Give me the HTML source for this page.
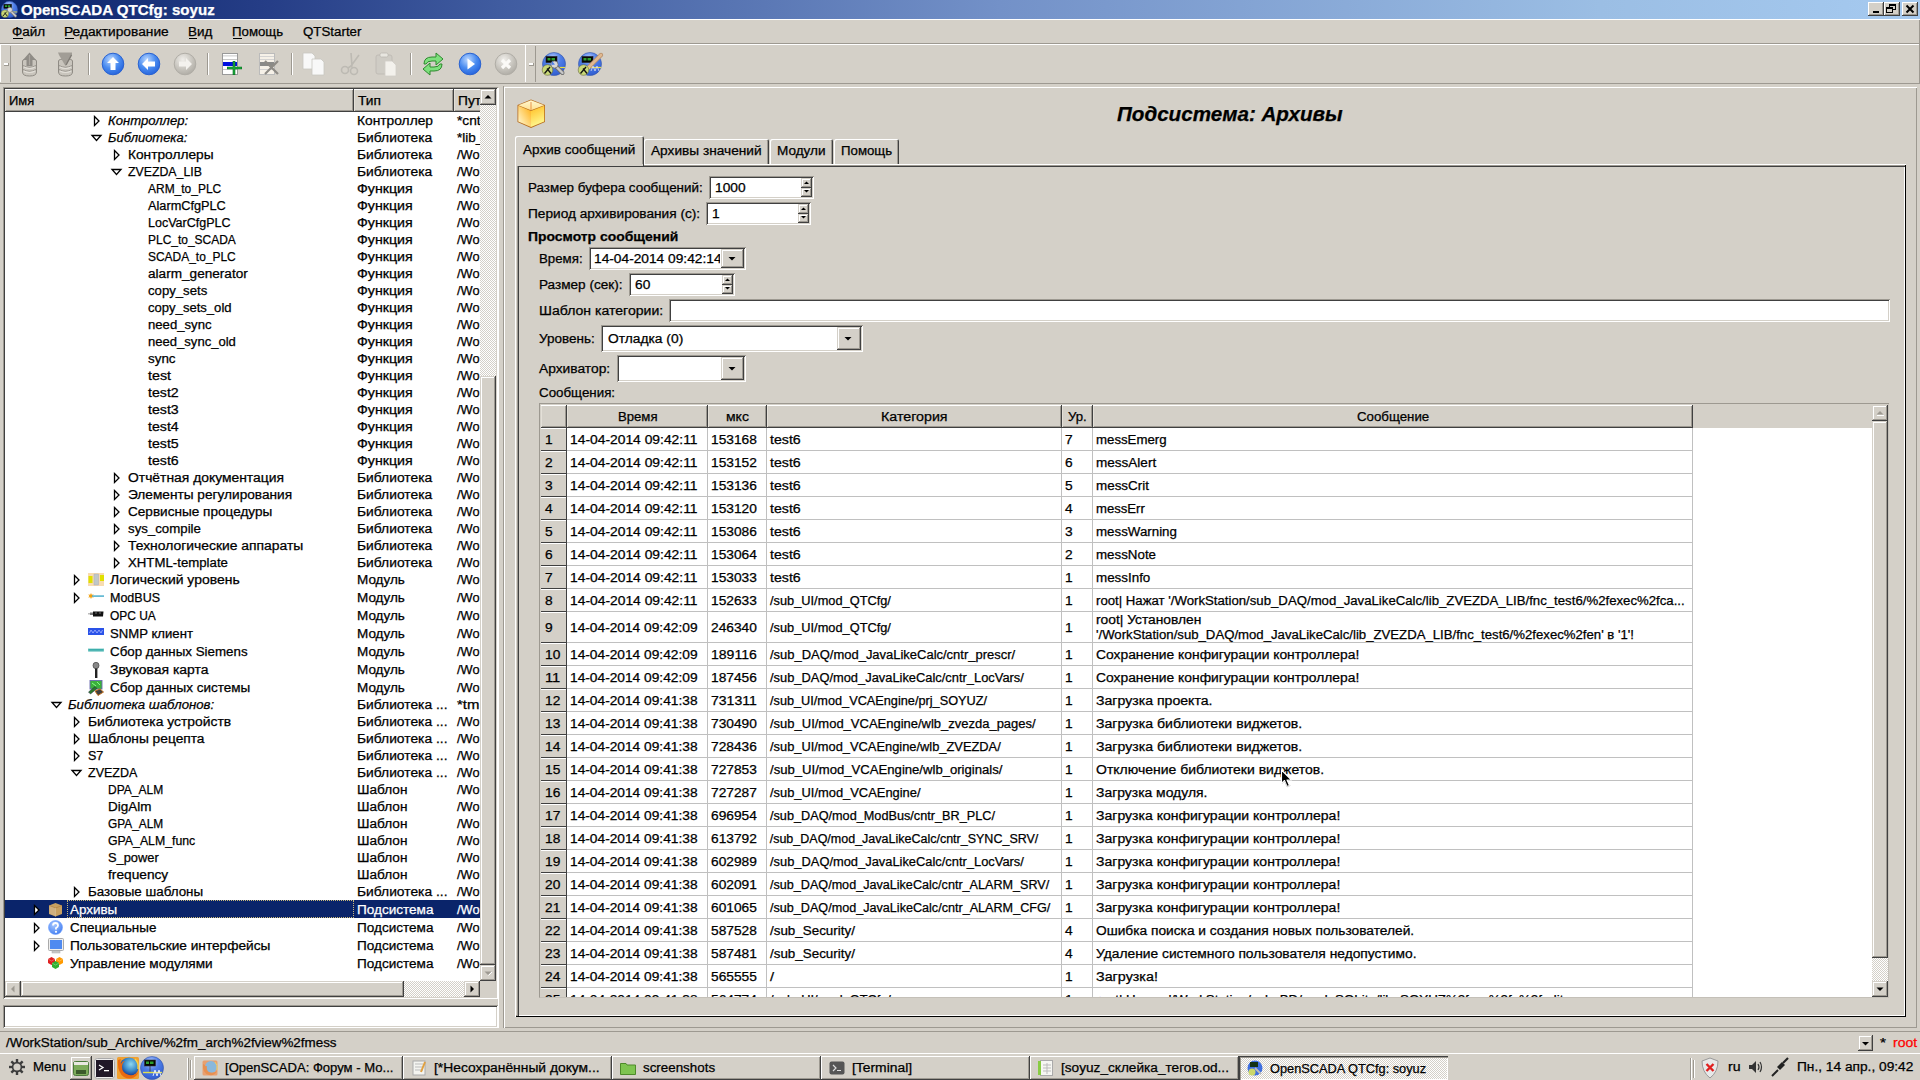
<!DOCTYPE html><html><head><meta charset="utf-8"><style>
html,body{margin:0;padding:0;}
body{width:1920px;height:1080px;overflow:hidden;position:relative;background:#d4d0c8;font-family:"Liberation Sans", sans-serif;font-size:13.4px;color:#000;}
body div{position:absolute;box-sizing:border-box;}
.t{white-space:nowrap;-webkit-text-stroke:0.25px currentColor;}
svg{position:absolute;overflow:visible;}
</style></head><body>
<div style="left:0px;top:0px;width:1920px;height:19px;background:linear-gradient(90deg,rgb(10,36,106) 0%,rgb(38,62,135) 14.06%,rgb(64,92,160) 26.04%,rgb(115,145,200) 52.08%,rgb(155,190,228) 83.33%,rgb(162,198,236) 94.8%,rgb(166,202,240) 100%);"></div><div class="t" style="left:21.00px;top:1.39px;line-height:19px;font-size:13.89px;font-weight:bold;color:#fff;transform:scaleX(1.0862);transform-origin:0 0;">OpenSCADA QTCfg: soyuz</div><div style="left:1868px;top:2px;width:16px;height:14px;background:#d4d0c8;box-shadow: inset -1px -1px #404040, inset 1px 1px #fff, inset -2px -2px #9d9991;"></div><div style="left:1884px;top:2px;width:16px;height:14px;background:#d4d0c8;box-shadow: inset -1px -1px #404040, inset 1px 1px #fff, inset -2px -2px #9d9991;"></div><div style="left:1902px;top:2px;width:16px;height:14px;background:#d4d0c8;box-shadow: inset -1px -1px #404040, inset 1px 1px #fff, inset -2px -2px #9d9991;"></div><svg style="left:1868px;top:2px" width="50" height="14"><rect x="5" y="9" width="6" height="2" fill="#000"/><rect x="21.5" y="2.5" width="6" height="5" fill="none" stroke="#000" stroke-width="1"/><rect x="21" y="2" width="7" height="2" fill="#000"/><rect x="18.5" y="5.5" width="6" height="5" fill="#d4d0c8" stroke="#000" stroke-width="1"/><rect x="18" y="5" width="7" height="2" fill="#000"/><path d="M38.5 3.5 L45.5 10.5 M45.5 3.5 L38.5 10.5" stroke="#000" stroke-width="2"/></svg><div style="left:0px;top:19px;width:1920px;height:1px;background:#fff;"></div><div style="left:1919px;top:20px;width:1px;height:64px;background:#9d9991;"></div><div style="left:0px;top:43px;width:1919px;height:1px;background:#9d9991;"></div><div style="left:0px;top:44px;width:1919px;height:1px;background:#fff;"></div><div class="t" style="left:12.00px;top:23.87px;line-height:17px;font-size:12.5px;transform:scaleX(1.0788);transform-origin:0 0;">Файл</div><div class="t" style="left:64.00px;top:23.87px;line-height:17px;font-size:12.5px;transform:scaleX(1.0999);transform-origin:0 0;">Редактирование</div><div class="t" style="left:188.00px;top:23.87px;line-height:17px;font-size:12.5px;transform:scaleX(1.0753);transform-origin:0 0;">Вид</div><div class="t" style="left:232.00px;top:23.87px;line-height:17px;font-size:12.5px;transform:scaleX(1.0592);transform-origin:0 0;">Помощь</div><div class="t" style="left:303.00px;top:23.87px;line-height:17px;font-size:12.5px;transform:scaleX(1.0652);transform-origin:0 0;">QTStarter</div><div style="left:13px;top:38px;width:10px;height:1px;background:#000;"></div><div style="left:65px;top:38px;width:9px;height:1px;background:#000;"></div><div style="left:189px;top:38px;width:8px;height:1px;background:#000;"></div><div style="left:233px;top:38px;width:9px;height:1px;background:#000;"></div><div style="left:0px;top:83px;width:1919px;height:1px;background:#9d9991;"></div><div style="left:0px;top:45px;width:1px;height:37px;background:#fff;"></div><div style="left:4px;top:63px;width:5px;height:3px;background:#fff;box-shadow: inset -1px -1px #9d9991;"></div><div style="left:10px;top:46px;width:1px;height:36px;background:#9d9991;"></div><div style="left:525px;top:45px;width:1px;height:37px;background:#fff;"></div><div style="left:529px;top:63px;width:5px;height:3px;background:#fff;box-shadow: inset -1px -1px #9d9991;"></div><div style="left:535px;top:46px;width:1px;height:36px;background:#9d9991;"></div><div style="left:88px;top:53px;width:1px;height:22px;background:#9d9991;"></div><div style="left:89px;top:53px;width:1px;height:22px;background:#fff;"></div><div style="left:207px;top:53px;width:1px;height:22px;background:#9d9991;"></div><div style="left:208px;top:53px;width:1px;height:22px;background:#fff;"></div><div style="left:291px;top:53px;width:1px;height:22px;background:#9d9991;"></div><div style="left:292px;top:53px;width:1px;height:22px;background:#fff;"></div><div style="left:410px;top:53px;width:1px;height:22px;background:#9d9991;"></div><div style="left:411px;top:53px;width:1px;height:22px;background:#fff;"></div><svg style="left:0;top:0" width="0" height="0"><defs><linearGradient id="gdb" x1="0" x2="1"><stop offset="0" stop-color="#b8b5ae"/><stop offset="0.5" stop-color="#e0ddd6"/><stop offset="1" stop-color="#a8a59e"/></linearGradient><radialGradient id="blu" cx="0.4" cy="0.3" r="0.8"><stop offset="0" stop-color="#bcd8ff"/><stop offset="0.5" stop-color="#4a8cf0"/><stop offset="1" stop-color="#1d5ad8"/></radialGradient><radialGradient id="gry" cx="0.4" cy="0.3" r="0.8"><stop offset="0" stop-color="#f0eeea"/><stop offset="0.6" stop-color="#c4c1ba"/><stop offset="1" stop-color="#a9a69f"/></radialGradient><linearGradient id="cube" x1="0" y1="0" x2="1" y2="1"><stop offset="0" stop-color="#fff6c0"/><stop offset="0.5" stop-color="#ffc830"/><stop offset="1" stop-color="#ffe890"/></linearGradient></defs></svg><svg style="left:21px;top:52px" width="18" height="24" viewBox="0 0 18 24"><path d="M1.5 9 Q1.5 7 8.5 7 Q15.5 7 15.5 9 L15.5 20 Q15.5 24 8.5 24 Q1.5 24 1.5 20 Z" fill="#c9c5bd" stroke="#8f8b84" stroke-width="1"/><path d="M2 13.5 Q8.5 17 15 13.5 M2 17.5 Q8.5 21 15 17.5" stroke="#99958e" stroke-width="1" fill="none"/><path d="M3 15 Q8.5 18 14 15 M3 19 Q8.5 22 14 19" stroke="#e2dfd8" stroke-width="1.2" fill="none"/><path d="M8.5 0.5 L15 8 L11.5 8 L11.5 14 L5.5 14 L5.5 8 L2 8 Z" fill="#8f8c86"/><path d="M8.5 3 L8.5 13" stroke="#aaa69f" stroke-width="1.2"/></svg><svg style="left:57px;top:52px" width="18" height="24" viewBox="0 0 18 24"><path d="M1.5 9 Q1.5 7 8.5 7 Q15.5 7 15.5 9 L15.5 20 Q15.5 24 8.5 24 Q1.5 24 1.5 20 Z" fill="#c9c5bd" stroke="#8f8b84" stroke-width="1"/><path d="M2 13.5 Q8.5 17 15 13.5 M2 17.5 Q8.5 21 15 17.5" stroke="#99958e" stroke-width="1" fill="none"/><path d="M3 15 Q8.5 18 14 15 M3 19 Q8.5 22 14 19" stroke="#e2dfd8" stroke-width="1.2" fill="none"/><path d="M1 0.5 L15 0.5 L15 3 L8.5 14 L2 3 Z" fill="#a19d96"/><path d="M14.5 3 L9 13" stroke="#7f7b75" stroke-width="1.4"/></svg><svg style="left:101px;top:52px" width="24" height="24" viewBox="0 0 24 24"><circle cx="12" cy="12" r="10.8" fill="url(#blu)" stroke="#2a62d0" stroke-width="1"/><path d="M12 5 L18 11 L14.5 11 L14.5 18 L9.5 18 L9.5 11 L6 11 Z" fill="#fff"/></svg><svg style="left:137px;top:52px" width="24" height="24" viewBox="0 0 24 24"><circle cx="12" cy="12" r="10.8" fill="url(#blu)" stroke="#2a62d0" stroke-width="1"/><path d="M5 12 L11 6 L11 9.5 L18 9.5 L18 14.5 L11 14.5 L11 18 Z" fill="#fff"/></svg><svg style="left:173px;top:52px" width="24" height="24" viewBox="0 0 24 24"><circle cx="12" cy="12" r="10.8" fill="url(#gry)" stroke="#b0ada6" stroke-width="1"/><path d="M19 12 L13 6 L13 9.5 L6 9.5 L6 14.5 L13 14.5 L13 18 Z" fill="#f4f2ee"/></svg><svg style="left:222px;top:52px" width="24" height="24" viewBox="0 0 24 24"><rect x="0.5" y="1.5" width="15" height="21" fill="#fff" stroke="#999" stroke-width="1"/><rect x="1" y="3.5" width="14" height="0.8" fill="#bbb"/><rect x="1" y="7" width="14" height="0.8" fill="#bbb"/><rect x="1" y="10" width="14" height="4" fill="#0010e0"/><rect x="1" y="17" width="14" height="0.8" fill="#bbb"/><path d="M12 9 L12 23 M5 16 L20 16" stroke="#0a6e20" stroke-width="2.6"/><path d="M12 9.5 L12 22.5 M5.5 16 L19.5 16" stroke="#1aa83a" stroke-width="1.4"/></svg><svg style="left:259px;top:52px" width="24" height="24" viewBox="0 0 24 24"><rect x="0.5" y="1.5" width="15" height="21" fill="#f6f1e8" stroke="#bbb" stroke-width="1"/><rect x="1" y="4" width="14" height="0.8" fill="#ccc"/><rect x="1" y="7" width="14" height="0.8" fill="#ccc"/><rect x="1" y="10" width="14" height="4" fill="#8a8a88"/><rect x="1" y="17" width="14" height="0.8" fill="#ccc"/><path d="M6 22 L19 9 M6 9 L19 22" stroke="#8e8b86" stroke-width="2.2"/></svg><svg style="left:302px;top:52px" width="24" height="24" viewBox="0 0 24 24"><path d="M1 1 L10 1 L13 4 L13 17 L1 17 Z" fill="#f8f8f8" stroke="#c8c6c0" stroke-width="0.8"/><path d="M10 7 L19 7 L22 10 L22 23 L10 23 Z" fill="#f8f8f8" stroke="#c8c6c0" stroke-width="0.8"/></svg><svg style="left:339px;top:52px" width="24" height="24" viewBox="0 0 24 24"><path d="M12 1 L13 14 M20 3 L12 14" stroke="#bdbab3" stroke-width="1.6" fill="none"/><circle cx="6" cy="18" r="3.5" fill="none" stroke="#bdbab3" stroke-width="1.6"/><circle cx="15" cy="19" r="3.5" fill="none" stroke="#bdbab3" stroke-width="1.6"/><path d="M9 16 L12 14 L14 16" stroke="#bdbab3" stroke-width="1.6" fill="none"/></svg><svg style="left:375px;top:52px" width="24" height="24" viewBox="0 0 24 24"><rect x="1" y="3" width="16" height="19" rx="2" fill="#cfccc5" stroke="#bbb8b1" stroke-width="0.8"/><rect x="5" y="1" width="8" height="4" rx="1.5" fill="#e8e6e0" stroke="#bbb8b1" stroke-width="0.8"/><path d="M10 9 L17 9 L21 13 L21 24 L10 24 Z" fill="#f3f1ec" stroke="#d0cec8" stroke-width="0.8"/></svg><svg style="left:421px;top:52px" width="24" height="24" viewBox="0 0 24 24"><path d="M3 12 Q3 5 11 5 L15 5 L15 1 L22 7 L15 13 L15 9 L11 9 Q6 9 5 12 Z" fill="#7de07d" stroke="#2e8a2e" stroke-width="1"/><path d="M21 12 Q21 19 13 19 L9 19 L9 23 L2 17 L9 11 L9 15 L13 15 Q18 15 19 12 Z" fill="#7de07d" stroke="#2e8a2e" stroke-width="1"/></svg><svg style="left:458px;top:52px" width="24" height="24" viewBox="0 0 24 24"><circle cx="12" cy="12" r="10.8" fill="url(#blu)" stroke="#2a62d0" stroke-width="1"/><path d="M9.5 6.5 L17 12 L9.5 17.5 Z" fill="#fff"/></svg><svg style="left:494px;top:52px" width="24" height="24" viewBox="0 0 24 24"><circle cx="12" cy="12" r="10.8" fill="url(#gry)" stroke="#b0ada6" stroke-width="1"/><path d="M8 8 L16 16 M16 8 L8 16" stroke="#fbfaf7" stroke-width="3.2"/></svg><svg style="left:542px;top:52px" width="24" height="24" viewBox="0 0 24 24"><defs><radialGradient id="osb" cx="0.45" cy="0.25" r="0.75"><stop offset="0" stop-color="#b8ccff"/><stop offset="0.45" stop-color="#4f7fe8"/><stop offset="1" stop-color="#2f5cd0"/></radialGradient></defs><circle cx="12" cy="12" r="11.5" fill="url(#osb)" stroke="#3556a8" stroke-width="0.6"/><rect x="4" y="4.5" width="11" height="6" fill="#060806" stroke="#222" stroke-width="0.6"/><rect x="5.5" y="6" width="3" height="2.5" fill="#2ea02e"/><rect x="9.5" y="6" width="3.5" height="2.5" fill="#2ea02e"/><path d="M12 15.5 L23 15.5" stroke="#e8e040" stroke-width="1.2"/><path d="M14.5 15 L20.5 21" stroke="#6f6f6f" stroke-width="4" stroke-linecap="round"/><path d="M14.5 15 L20.5 21" stroke="#c8c8c8" stroke-width="2.4" stroke-linecap="round"/><circle cx="12.5" cy="12.5" r="3.6" fill="#d8d8d8" stroke="#666" stroke-width="0.7"/><path d="M10 9 L13 12.5 L9.5 13 Z" fill="#4f7fe8"/><circle cx="5.5" cy="18" r="5.3" fill="#c8d878" stroke="#6a6a40" stroke-width="0.6"/><path d="M2.5 21.5 L8 15 M5 16.5 L9 21.5" stroke="#111" stroke-width="1.3"/></svg><svg style="left:578px;top:52px" width="24" height="24" viewBox="0 0 24 24"><defs><radialGradient id="osb" cx="0.45" cy="0.25" r="0.75"><stop offset="0" stop-color="#b8ccff"/><stop offset="0.45" stop-color="#4f7fe8"/><stop offset="1" stop-color="#2f5cd0"/></radialGradient></defs><circle cx="12" cy="12" r="11.5" fill="url(#osb)" stroke="#3556a8" stroke-width="0.6"/><rect x="4" y="4.5" width="11" height="6" fill="#060806" stroke="#222" stroke-width="0.6"/><rect x="5.5" y="6" width="3" height="2.5" fill="#2ea02e"/><rect x="9.5" y="6" width="3.5" height="2.5" fill="#2ea02e"/><path d="M12 15.5 L23 15.5" stroke="#e8e040" stroke-width="1.2"/><path d="M23 3 L11 15" stroke="#b8906a" stroke-width="4.2" stroke-linecap="round"/><path d="M23 3 L11 15" stroke="#e0b890" stroke-width="2.6" stroke-linecap="round"/><path d="M11 15 L9.5 17" stroke="#e8e070" stroke-width="3"/><path d="M13 19 L15 14 L17 19 L19 14 L21 19" stroke="#dde" stroke-width="0.8" fill="none"/><circle cx="5.5" cy="18" r="5.3" fill="#c8d878" stroke="#6a6a40" stroke-width="0.6"/><path d="M2.5 21.5 L8 15 M5 16.5 L9 21.5" stroke="#111" stroke-width="1.3"/></svg><svg style="left:1px;top:1px" width="17" height="17" viewBox="0 0 24 24"><defs><radialGradient id="osb2" cx="0.45" cy="0.25" r="0.75"><stop offset="0" stop-color="#b8ccff"/><stop offset="0.45" stop-color="#4f7fe8"/><stop offset="1" stop-color="#2f5cd0"/></radialGradient></defs><circle cx="12" cy="12" r="11.5" fill="url(#osb2)" stroke="#3556a8" stroke-width="0.6"/><rect x="4" y="4.5" width="11" height="6" fill="#060806" stroke="#222" stroke-width="0.6"/><rect x="5.5" y="6" width="3" height="2.5" fill="#2ea02e"/><rect x="9.5" y="6" width="3.5" height="2.5" fill="#2ea02e"/><path d="M12 15.5 L23 15.5" stroke="#e8e040" stroke-width="1.2"/><path d="M14.5 15 L20.5 21" stroke="#6f6f6f" stroke-width="4" stroke-linecap="round"/><path d="M14.5 15 L20.5 21" stroke="#c8c8c8" stroke-width="2.4" stroke-linecap="round"/><circle cx="12.5" cy="12.5" r="3.6" fill="#d8d8d8" stroke="#666" stroke-width="0.7"/><circle cx="5.5" cy="18" r="5.3" fill="#c8d878" stroke="#6a6a40" stroke-width="0.6"/><path d="M2.5 21.5 L8 15 M5 16.5 L9 21.5" stroke="#111" stroke-width="1.3"/></svg><div style="left:3px;top:87px;width:495px;height:912px;background:#fff;box-shadow: inset 1px 1px #9d9991, inset -1px -1px #fff, inset 2px 2px #404040, inset -2px -2px #d4d0c8;"></div><div style="left:5px;top:89px;width:349px;height:23px;background:#d4d0c8;box-shadow: inset -1px -1px #404040, inset 0 1px #fff, inset 1px 0 #e4e0d8, inset -2px -2px #9d9991;"></div><div style="left:354px;top:89px;width:100px;height:23px;background:#d4d0c8;box-shadow: inset -1px -1px #404040, inset 0 1px #fff, inset 1px 0 #e4e0d8, inset -2px -2px #9d9991;"></div><div style="left:454px;top:89px;width:40px;height:23px;background:#d4d0c8;box-shadow: inset -1px -1px #404040, inset 0 1px #fff, inset 1px 0 #e4e0d8, inset -2px -2px #9d9991;"></div><div class="t" style="left:9.00px;top:92.87px;line-height:17px;font-size:12.5px;transform:scaleX(1.0372);transform-origin:0 0;">Имя</div><div class="t" style="left:358.00px;top:92.87px;line-height:17px;font-size:12.5px;transform:scaleX(1.1019);transform-origin:0 0;">Тип</div><div style="left:458px;top:89px;width:22px;height:22px;overflow:hidden;"><div class="t" style="left:0.00px;top:3.87px;line-height:17px;font-size:12.5px;transform:scaleX(1.0995);transform-origin:0 0;">Путь</div></div><div style="left:480px;top:89px;width:16px;height:892px;background-color:#fff;background-image:linear-gradient(45deg,#d4d0c8 25%,transparent 25%,transparent 75%,#d4d0c8 75%),linear-gradient(45deg,#d4d0c8 25%,transparent 25%,transparent 75%,#d4d0c8 75%);background-size:2px 2px;background-position:0 0,1px 1px;"></div><div style="left:480px;top:89px;width:16px;height:16px;background:#d4d0c8;box-shadow: inset -1px -1px #404040, inset 1px 1px #d4d0c8, inset -2px -2px #9d9991, inset 2px 2px #fff;"></div><svg style="left:480px;top:89px" width="16" height="16" viewBox="0 0 16 16"><path d="M4.5 9.5 L8 6 L11.5 9.5 Z" fill="#000"/></svg><div style="left:480px;top:376px;width:16px;height:589px;background:#d4d0c8;box-shadow: inset -1px -1px #404040, inset 1px 1px #d4d0c8, inset -2px -2px #9d9991, inset 2px 2px #fff;"></div><div style="left:480px;top:965px;width:16px;height:16px;background:#d4d0c8;box-shadow: inset -1px -1px #404040, inset 1px 1px #d4d0c8, inset -2px -2px #9d9991, inset 2px 2px #fff;"></div><svg style="left:480px;top:965px" width="16" height="16" viewBox="0 0 16 16"><path d="M4.5 6.5 L8 10 L11.5 6.5 Z" fill="#9d9991"/><path d="M8.5 10.5 L12 7" stroke="#fff" stroke-width="1"/></svg><div style="left:5px;top:981px;width:475px;height:16px;background-color:#fff;background-image:linear-gradient(45deg,#d4d0c8 25%,transparent 25%,transparent 75%,#d4d0c8 75%),linear-gradient(45deg,#d4d0c8 25%,transparent 25%,transparent 75%,#d4d0c8 75%);background-size:2px 2px;background-position:0 0,1px 1px;"></div><div style="left:5px;top:981px;width:16px;height:16px;background:#d4d0c8;box-shadow: inset -1px -1px #404040, inset 1px 1px #d4d0c8, inset -2px -2px #9d9991, inset 2px 2px #fff;"></div><svg style="left:5px;top:981px" width="16" height="16" viewBox="0 0 16 16"><path d="M9.5 4.5 L6 8 L9.5 11.5 Z" fill="#9d9991"/></svg><div style="left:21px;top:981px;width:383px;height:16px;background:#d4d0c8;box-shadow: inset -1px -1px #404040, inset 1px 1px #d4d0c8, inset -2px -2px #9d9991, inset 2px 2px #fff;"></div><div style="left:464px;top:981px;width:16px;height:16px;background:#d4d0c8;box-shadow: inset -1px -1px #404040, inset 1px 1px #d4d0c8, inset -2px -2px #9d9991, inset 2px 2px #fff;"></div><svg style="left:464px;top:981px" width="16" height="16" viewBox="0 0 16 16"><path d="M6.5 4.5 L10 8 L6.5 11.5 Z" fill="#000"/></svg><div style="left:480px;top:981px;width:16px;height:16px;background:#d4d0c8;"></div><div style="left:5px;top:900px;width:475px;height:18px;background:#0a246a;"></div><div style="left:67px;top:900px;width:287px;height:18px;border:1px dotted #c9b87a;"></div><div style="left:5px;top:112px;width:475px;height:869px;overflow:hidden;"><svg style="left:0;top:0" width="475" height="1"><path d="M89.5 4.5 L94.0 9.0 L89.5 13.5 Z" fill="none" stroke="#000" stroke-width="1.3"/></svg><div class="t" style="left:103.00px;top:0.87px;line-height:17px;font-size:12.5px;font-style:italic;color:#000;transform:scaleX(1.0459);transform-origin:0 0;">Контроллер:</div><div class="t" style="left:352.00px;top:0.87px;line-height:17px;font-size:12.5px;color:#000;transform:scaleX(1.1019);transform-origin:0 0;">Контроллер</div><div class="t" style="left:452.00px;top:0.87px;line-height:17px;font-size:12.5px;color:#000;transform:scaleX(1.0981);transform-origin:0 0;">*cntr_</div><svg style="left:0;top:0" width="475" height="1"><path d="M87.0 23.5 L96.0 23.5 L91.5 28.5 Z" fill="none" stroke="#000" stroke-width="1.3"/></svg><div class="t" style="left:103.00px;top:17.87px;line-height:17px;font-size:12.5px;font-style:italic;color:#000;transform:scaleX(1.0366);transform-origin:0 0;">Библиотека:</div><div class="t" style="left:352.00px;top:17.87px;line-height:17px;font-size:12.5px;color:#000;transform:scaleX(1.1069);transform-origin:0 0;">Библиотека</div><div class="t" style="left:452.00px;top:17.87px;line-height:17px;font-size:12.5px;color:#000;transform:scaleX(1.0803);transform-origin:0 0;">*lib_</div><svg style="left:0;top:0" width="475" height="1"><path d="M109.5 38.5 L114.0 43.0 L109.5 47.5 Z" fill="none" stroke="#000" stroke-width="1.3"/></svg><div class="t" style="left:123.00px;top:34.87px;line-height:17px;font-size:12.5px;color:#000;transform:scaleX(1.0964);transform-origin:0 0;">Контроллеры</div><div class="t" style="left:352.00px;top:34.87px;line-height:17px;font-size:12.5px;color:#000;transform:scaleX(1.1069);transform-origin:0 0;">Библиотека</div><div class="t" style="left:452.00px;top:34.87px;line-height:17px;font-size:12.5px;color:#000;transform:scaleX(1.0249);transform-origin:0 0;">/Wo</div><svg style="left:0;top:0" width="475" height="1"><path d="M107.0 57.5 L116.0 57.5 L111.5 62.5 Z" fill="none" stroke="#000" stroke-width="1.3"/></svg><div class="t" style="left:123.00px;top:51.87px;line-height:17px;font-size:12.5px;color:#000;transform:scaleX(0.9848);transform-origin:0 0;">ZVEZDA_LIB</div><div class="t" style="left:352.00px;top:51.87px;line-height:17px;font-size:12.5px;color:#000;transform:scaleX(1.1069);transform-origin:0 0;">Библиотека</div><div class="t" style="left:452.00px;top:51.87px;line-height:17px;font-size:12.5px;color:#000;transform:scaleX(1.0249);transform-origin:0 0;">/Wo</div><div class="t" style="left:143.00px;top:68.87px;line-height:17px;font-size:12.5px;color:#000;transform:scaleX(0.9583);transform-origin:0 0;">ARM_to_PLC</div><div class="t" style="left:352.00px;top:68.87px;line-height:17px;font-size:12.5px;color:#000;transform:scaleX(1.1364);transform-origin:0 0;">Функция</div><div class="t" style="left:452.00px;top:68.87px;line-height:17px;font-size:12.5px;color:#000;transform:scaleX(1.0249);transform-origin:0 0;">/Wo</div><div class="t" style="left:143.00px;top:85.87px;line-height:17px;font-size:12.5px;color:#000;transform:scaleX(1.0184);transform-origin:0 0;">AlarmCfgPLC</div><div class="t" style="left:352.00px;top:85.87px;line-height:17px;font-size:12.5px;color:#000;transform:scaleX(1.1364);transform-origin:0 0;">Функция</div><div class="t" style="left:452.00px;top:85.87px;line-height:17px;font-size:12.5px;color:#000;transform:scaleX(1.0249);transform-origin:0 0;">/Wo</div><div class="t" style="left:143.00px;top:102.87px;line-height:17px;font-size:12.5px;color:#000;">LocVarCfgPLC</div><div class="t" style="left:352.00px;top:102.87px;line-height:17px;font-size:12.5px;color:#000;transform:scaleX(1.1364);transform-origin:0 0;">Функция</div><div class="t" style="left:452.00px;top:102.87px;line-height:17px;font-size:12.5px;color:#000;transform:scaleX(1.0249);transform-origin:0 0;">/Wo</div><div class="t" style="left:143.00px;top:119.87px;line-height:17px;font-size:12.5px;color:#000;transform:scaleX(0.9567);transform-origin:0 0;">PLC_to_SCADA</div><div class="t" style="left:352.00px;top:119.87px;line-height:17px;font-size:12.5px;color:#000;transform:scaleX(1.1364);transform-origin:0 0;">Функция</div><div class="t" style="left:452.00px;top:119.87px;line-height:17px;font-size:12.5px;color:#000;transform:scaleX(1.0249);transform-origin:0 0;">/Wo</div><div class="t" style="left:143.00px;top:136.87px;line-height:17px;font-size:12.5px;color:#000;transform:scaleX(0.9567);transform-origin:0 0;">SCADA_to_PLC</div><div class="t" style="left:352.00px;top:136.87px;line-height:17px;font-size:12.5px;color:#000;transform:scaleX(1.1364);transform-origin:0 0;">Функция</div><div class="t" style="left:452.00px;top:136.87px;line-height:17px;font-size:12.5px;color:#000;transform:scaleX(1.0249);transform-origin:0 0;">/Wo</div><div class="t" style="left:143.00px;top:153.87px;line-height:17px;font-size:12.5px;color:#000;transform:scaleX(1.0879);transform-origin:0 0;">alarm_generator</div><div class="t" style="left:352.00px;top:153.87px;line-height:17px;font-size:12.5px;color:#000;transform:scaleX(1.1364);transform-origin:0 0;">Функция</div><div class="t" style="left:452.00px;top:153.87px;line-height:17px;font-size:12.5px;color:#000;transform:scaleX(1.0249);transform-origin:0 0;">/Wo</div><div class="t" style="left:143.00px;top:170.87px;line-height:17px;font-size:12.5px;color:#000;transform:scaleX(1.0530);transform-origin:0 0;">copy_sets</div><div class="t" style="left:352.00px;top:170.87px;line-height:17px;font-size:12.5px;color:#000;transform:scaleX(1.1364);transform-origin:0 0;">Функция</div><div class="t" style="left:452.00px;top:170.87px;line-height:17px;font-size:12.5px;color:#000;transform:scaleX(1.0249);transform-origin:0 0;">/Wo</div><div class="t" style="left:143.00px;top:187.87px;line-height:17px;font-size:12.5px;color:#000;transform:scaleX(1.0456);transform-origin:0 0;">copy_sets_old</div><div class="t" style="left:352.00px;top:187.87px;line-height:17px;font-size:12.5px;color:#000;transform:scaleX(1.1364);transform-origin:0 0;">Функция</div><div class="t" style="left:452.00px;top:187.87px;line-height:17px;font-size:12.5px;color:#000;transform:scaleX(1.0249);transform-origin:0 0;">/Wo</div><div class="t" style="left:143.00px;top:204.87px;line-height:17px;font-size:12.5px;color:#000;transform:scaleX(1.0514);transform-origin:0 0;">need_sync</div><div class="t" style="left:352.00px;top:204.87px;line-height:17px;font-size:12.5px;color:#000;transform:scaleX(1.1364);transform-origin:0 0;">Функция</div><div class="t" style="left:452.00px;top:204.87px;line-height:17px;font-size:12.5px;color:#000;transform:scaleX(1.0249);transform-origin:0 0;">/Wo</div><div class="t" style="left:143.00px;top:221.87px;line-height:17px;font-size:12.5px;color:#000;transform:scaleX(1.0448);transform-origin:0 0;">need_sync_old</div><div class="t" style="left:352.00px;top:221.87px;line-height:17px;font-size:12.5px;color:#000;transform:scaleX(1.1364);transform-origin:0 0;">Функция</div><div class="t" style="left:452.00px;top:221.87px;line-height:17px;font-size:12.5px;color:#000;transform:scaleX(1.0249);transform-origin:0 0;">/Wo</div><div class="t" style="left:143.00px;top:238.87px;line-height:17px;font-size:12.5px;color:#000;transform:scaleX(1.0723);transform-origin:0 0;">sync</div><div class="t" style="left:352.00px;top:238.87px;line-height:17px;font-size:12.5px;color:#000;transform:scaleX(1.1364);transform-origin:0 0;">Функция</div><div class="t" style="left:452.00px;top:238.87px;line-height:17px;font-size:12.5px;color:#000;transform:scaleX(1.0249);transform-origin:0 0;">/Wo</div><div class="t" style="left:143.00px;top:255.87px;line-height:17px;font-size:12.5px;color:#000;transform:scaleX(1.1443);transform-origin:0 0;">test</div><div class="t" style="left:352.00px;top:255.87px;line-height:17px;font-size:12.5px;color:#000;transform:scaleX(1.1364);transform-origin:0 0;">Функция</div><div class="t" style="left:452.00px;top:255.87px;line-height:17px;font-size:12.5px;color:#000;transform:scaleX(1.0249);transform-origin:0 0;">/Wo</div><div class="t" style="left:143.00px;top:272.87px;line-height:17px;font-size:12.5px;color:#000;transform:scaleX(1.1326);transform-origin:0 0;">test2</div><div class="t" style="left:352.00px;top:272.87px;line-height:17px;font-size:12.5px;color:#000;transform:scaleX(1.1364);transform-origin:0 0;">Функция</div><div class="t" style="left:452.00px;top:272.87px;line-height:17px;font-size:12.5px;color:#000;transform:scaleX(1.0249);transform-origin:0 0;">/Wo</div><div class="t" style="left:143.00px;top:289.87px;line-height:17px;font-size:12.5px;color:#000;transform:scaleX(1.1326);transform-origin:0 0;">test3</div><div class="t" style="left:352.00px;top:289.87px;line-height:17px;font-size:12.5px;color:#000;transform:scaleX(1.1364);transform-origin:0 0;">Функция</div><div class="t" style="left:452.00px;top:289.87px;line-height:17px;font-size:12.5px;color:#000;transform:scaleX(1.0249);transform-origin:0 0;">/Wo</div><div class="t" style="left:143.00px;top:306.87px;line-height:17px;font-size:12.5px;color:#000;transform:scaleX(1.1326);transform-origin:0 0;">test4</div><div class="t" style="left:352.00px;top:306.87px;line-height:17px;font-size:12.5px;color:#000;transform:scaleX(1.1364);transform-origin:0 0;">Функция</div><div class="t" style="left:452.00px;top:306.87px;line-height:17px;font-size:12.5px;color:#000;transform:scaleX(1.0249);transform-origin:0 0;">/Wo</div><div class="t" style="left:143.00px;top:323.87px;line-height:17px;font-size:12.5px;color:#000;transform:scaleX(1.1326);transform-origin:0 0;">test5</div><div class="t" style="left:352.00px;top:323.87px;line-height:17px;font-size:12.5px;color:#000;transform:scaleX(1.1364);transform-origin:0 0;">Функция</div><div class="t" style="left:452.00px;top:323.87px;line-height:17px;font-size:12.5px;color:#000;transform:scaleX(1.0249);transform-origin:0 0;">/Wo</div><div class="t" style="left:143.00px;top:340.87px;line-height:17px;font-size:12.5px;color:#000;transform:scaleX(1.1326);transform-origin:0 0;">test6</div><div class="t" style="left:352.00px;top:340.87px;line-height:17px;font-size:12.5px;color:#000;transform:scaleX(1.1364);transform-origin:0 0;">Функция</div><div class="t" style="left:452.00px;top:340.87px;line-height:17px;font-size:12.5px;color:#000;transform:scaleX(1.0249);transform-origin:0 0;">/Wo</div><svg style="left:0;top:0" width="475" height="1"><path d="M109.5 361.5 L114.0 366.0 L109.5 370.5 Z" fill="none" stroke="#000" stroke-width="1.3"/></svg><div class="t" style="left:123.00px;top:357.87px;line-height:17px;font-size:12.5px;color:#000;transform:scaleX(1.1094);transform-origin:0 0;">Отчётная документация</div><div class="t" style="left:352.00px;top:357.87px;line-height:17px;font-size:12.5px;color:#000;transform:scaleX(1.1069);transform-origin:0 0;">Библиотека</div><div class="t" style="left:452.00px;top:357.87px;line-height:17px;font-size:12.5px;color:#000;transform:scaleX(1.0249);transform-origin:0 0;">/Wo</div><svg style="left:0;top:0" width="475" height="1"><path d="M109.5 378.5 L114.0 383.0 L109.5 387.5 Z" fill="none" stroke="#000" stroke-width="1.3"/></svg><div class="t" style="left:123.00px;top:374.87px;line-height:17px;font-size:12.5px;color:#000;transform:scaleX(1.0931);transform-origin:0 0;">Элементы регулирования</div><div class="t" style="left:352.00px;top:374.87px;line-height:17px;font-size:12.5px;color:#000;transform:scaleX(1.1069);transform-origin:0 0;">Библиотека</div><div class="t" style="left:452.00px;top:374.87px;line-height:17px;font-size:12.5px;color:#000;transform:scaleX(1.0249);transform-origin:0 0;">/Wo</div><svg style="left:0;top:0" width="475" height="1"><path d="M109.5 395.5 L114.0 400.0 L109.5 404.5 Z" fill="none" stroke="#000" stroke-width="1.3"/></svg><div class="t" style="left:123.00px;top:391.87px;line-height:17px;font-size:12.5px;color:#000;transform:scaleX(1.0860);transform-origin:0 0;">Сервисные процедуры</div><div class="t" style="left:352.00px;top:391.87px;line-height:17px;font-size:12.5px;color:#000;transform:scaleX(1.1069);transform-origin:0 0;">Библиотека</div><div class="t" style="left:452.00px;top:391.87px;line-height:17px;font-size:12.5px;color:#000;transform:scaleX(1.0249);transform-origin:0 0;">/Wo</div><svg style="left:0;top:0" width="475" height="1"><path d="M109.5 412.5 L114.0 417.0 L109.5 421.5 Z" fill="none" stroke="#000" stroke-width="1.3"/></svg><div class="t" style="left:123.00px;top:408.87px;line-height:17px;font-size:12.5px;color:#000;transform:scaleX(1.0600);transform-origin:0 0;">sys_compile</div><div class="t" style="left:352.00px;top:408.87px;line-height:17px;font-size:12.5px;color:#000;transform:scaleX(1.1069);transform-origin:0 0;">Библиотека</div><div class="t" style="left:452.00px;top:408.87px;line-height:17px;font-size:12.5px;color:#000;transform:scaleX(1.0249);transform-origin:0 0;">/Wo</div><svg style="left:0;top:0" width="475" height="1"><path d="M109.5 429.5 L114.0 434.0 L109.5 438.5 Z" fill="none" stroke="#000" stroke-width="1.3"/></svg><div class="t" style="left:123.00px;top:425.87px;line-height:17px;font-size:12.5px;color:#000;transform:scaleX(1.1114);transform-origin:0 0;">Технологические аппараты</div><div class="t" style="left:352.00px;top:425.87px;line-height:17px;font-size:12.5px;color:#000;transform:scaleX(1.1069);transform-origin:0 0;">Библиотека</div><div class="t" style="left:452.00px;top:425.87px;line-height:17px;font-size:12.5px;color:#000;transform:scaleX(1.0249);transform-origin:0 0;">/Wo</div><svg style="left:0;top:0" width="475" height="1"><path d="M109.5 446.5 L114.0 451.0 L109.5 455.5 Z" fill="none" stroke="#000" stroke-width="1.3"/></svg><div class="t" style="left:123.00px;top:442.87px;line-height:17px;font-size:12.5px;color:#000;transform:scaleX(1.0579);transform-origin:0 0;">XHTML-template</div><div class="t" style="left:352.00px;top:442.87px;line-height:17px;font-size:12.5px;color:#000;transform:scaleX(1.1069);transform-origin:0 0;">Библиотека</div><div class="t" style="left:452.00px;top:442.87px;line-height:17px;font-size:12.5px;color:#000;transform:scaleX(1.0249);transform-origin:0 0;">/Wo</div><svg style="left:0;top:0" width="475" height="1"><path d="M69.5 463.5 L74.0 468.0 L69.5 472.5 Z" fill="none" stroke="#000" stroke-width="1.3"/></svg><svg style="left:83px;top:460px" width="16" height="16" viewBox="0 0 16 16"><rect x="0" y="1" width="16" height="13" fill="#f8dcb0"/><rect x="0.5" y="4" width="4" height="7" fill="#e0e000"/><rect x="12" y="3" width="4" height="6" fill="#e0e000"/><rect x="6" y="2" width="4.5" height="11" fill="#c0c8c8" stroke="#aab" stroke-width="0.5"/></svg><div class="t" style="left:105.00px;top:459.87px;line-height:17px;font-size:12.5px;color:#000;transform:scaleX(1.1159);transform-origin:0 0;">Логический уровень</div><div class="t" style="left:352.00px;top:459.87px;line-height:17px;font-size:12.5px;color:#000;transform:scaleX(1.0804);transform-origin:0 0;">Модуль</div><div class="t" style="left:452.00px;top:459.87px;line-height:17px;font-size:12.5px;color:#000;transform:scaleX(1.0249);transform-origin:0 0;">/Wo</div><svg style="left:0;top:0" width="475" height="1"><path d="M69.5 481.5 L74.0 486.0 L69.5 490.5 Z" fill="none" stroke="#000" stroke-width="1.3"/></svg><svg style="left:83px;top:478px" width="16" height="16" viewBox="0 0 16 16"><path d="M3 3 L3.8 4.8 L5.8 4.5 L4.6 6 L5.8 7.5 L3.8 7.2 L3 9 L2.2 7.2 L0.2 7.5 L1.4 6 L0.2 4.5 L2.2 4.8 Z" fill="#f0a010"/><rect x="4" y="5.3" width="12" height="1.6" fill="#58b4d0"/></svg><div class="t" style="left:105.00px;top:477.87px;line-height:17px;font-size:12.5px;color:#000;">ModBUS</div><div class="t" style="left:352.00px;top:477.87px;line-height:17px;font-size:12.5px;color:#000;transform:scaleX(1.0804);transform-origin:0 0;">Модуль</div><div class="t" style="left:452.00px;top:477.87px;line-height:17px;font-size:12.5px;color:#000;transform:scaleX(1.0249);transform-origin:0 0;">/Wo</div><svg style="left:83px;top:496px" width="16" height="16" viewBox="0 0 16 16"><rect x="0" y="5" width="3" height="1.5" fill="#bbb"/><rect x="2" y="4.5" width="3" height="2.5" fill="#777"/><path d="M5 3.5 L15.5 3.5 L15 8.5 L5 8.5 Z" fill="#111"/><path d="M7 5 L9 5 M11 5 L13 5" stroke="#888" stroke-width="0.8"/></svg><div class="t" style="left:105.00px;top:495.87px;line-height:17px;font-size:12.5px;color:#000;transform:scaleX(0.9566);transform-origin:0 0;">OPC UA</div><div class="t" style="left:352.00px;top:495.87px;line-height:17px;font-size:12.5px;color:#000;transform:scaleX(1.0804);transform-origin:0 0;">Модуль</div><div class="t" style="left:452.00px;top:495.87px;line-height:17px;font-size:12.5px;color:#000;transform:scaleX(1.0249);transform-origin:0 0;">/Wo</div><svg style="left:83px;top:514px" width="16" height="16" viewBox="0 0 16 16"><rect x="0" y="2" width="16" height="7" fill="#2a52e8"/><path d="M1.5 7 L3 4 L5 7 L7 4 L9 7 L11 4 L13 7 L14.5 4" stroke="#aab8ff" stroke-width="0.8" fill="none"/></svg><div class="t" style="left:105.00px;top:513.87px;line-height:17px;font-size:12.5px;color:#000;transform:scaleX(1.0521);transform-origin:0 0;">SNMP клиент</div><div class="t" style="left:352.00px;top:513.87px;line-height:17px;font-size:12.5px;color:#000;transform:scaleX(1.0804);transform-origin:0 0;">Модуль</div><div class="t" style="left:452.00px;top:513.87px;line-height:17px;font-size:12.5px;color:#000;transform:scaleX(1.0249);transform-origin:0 0;">/Wo</div><svg style="left:83px;top:532px" width="16" height="16" viewBox="0 0 16 16"><rect x="0" y="4.5" width="16" height="3" fill="#80cdc8"/><path d="M0.5 5.5 H15.5 M0.5 6.8 H15.5" stroke="#20a0a0" stroke-width="0.7"/></svg><div class="t" style="left:105.00px;top:531.87px;line-height:17px;font-size:12.5px;color:#000;transform:scaleX(1.0668);transform-origin:0 0;">Сбор данных Siemens</div><div class="t" style="left:352.00px;top:531.87px;line-height:17px;font-size:12.5px;color:#000;transform:scaleX(1.0804);transform-origin:0 0;">Модуль</div><div class="t" style="left:452.00px;top:531.87px;line-height:17px;font-size:12.5px;color:#000;transform:scaleX(1.0249);transform-origin:0 0;">/Wo</div><svg style="left:83px;top:550px" width="16" height="16" viewBox="0 0 16 16"><ellipse cx="8" cy="3.5" rx="3" ry="3.2" fill="#888" stroke="#444" stroke-width="0.7"/><rect x="7" y="6.5" width="2.4" height="9.5" fill="#222"/></svg><div class="t" style="left:105.00px;top:549.87px;line-height:17px;font-size:12.5px;color:#000;transform:scaleX(1.1155);transform-origin:0 0;">Звуковая карта</div><div class="t" style="left:352.00px;top:549.87px;line-height:17px;font-size:12.5px;color:#000;transform:scaleX(1.0804);transform-origin:0 0;">Модуль</div><div class="t" style="left:452.00px;top:549.87px;line-height:17px;font-size:12.5px;color:#000;transform:scaleX(1.0249);transform-origin:0 0;">/Wo</div><svg style="left:83px;top:568px" width="16" height="16" viewBox="0 0 16 16"><rect x="2" y="0.5" width="12" height="8.5" fill="#3cb03c" stroke="#6a6ab0" stroke-width="0.9"/><path d="M4 3 L8 6 M9 2 L12 5" stroke="#8f8" stroke-width="1"/><path d="M0.5 12 L7 6.5 L9 8.5 L2.5 14 Z" fill="#2a7a2a" stroke="#224" stroke-width="0.5"/><path d="M7 11 L12 9 L15.5 12 L10 15.5 Z" fill="#404040" stroke="#c07020" stroke-width="1"/></svg><div class="t" style="left:105.00px;top:567.87px;line-height:17px;font-size:12.5px;color:#000;transform:scaleX(1.0789);transform-origin:0 0;">Сбор данных системы</div><div class="t" style="left:352.00px;top:567.87px;line-height:17px;font-size:12.5px;color:#000;transform:scaleX(1.0804);transform-origin:0 0;">Модуль</div><div class="t" style="left:452.00px;top:567.87px;line-height:17px;font-size:12.5px;color:#000;transform:scaleX(1.0249);transform-origin:0 0;">/Wo</div><svg style="left:0;top:0" width="475" height="1"><path d="M47.0 590.5 L56.0 590.5 L51.5 595.5 Z" fill="none" stroke="#000" stroke-width="1.3"/></svg><div class="t" style="left:63.00px;top:584.87px;line-height:17px;font-size:12.5px;font-style:italic;color:#000;transform:scaleX(1.0559);transform-origin:0 0;">Библиотека шаблонов:</div><div class="t" style="left:352.00px;top:584.87px;line-height:17px;font-size:12.5px;color:#000;transform:scaleX(1.1056);transform-origin:0 0;">Библиотека ...</div><div class="t" style="left:452.00px;top:584.87px;line-height:17px;font-size:12.5px;color:#000;transform:scaleX(1.1952);transform-origin:0 0;">*tm</div><svg style="left:0;top:0" width="475" height="1"><path d="M69.5 605.5 L74.0 610.0 L69.5 614.5 Z" fill="none" stroke="#000" stroke-width="1.3"/></svg><div class="t" style="left:83.00px;top:601.87px;line-height:17px;font-size:12.5px;color:#000;transform:scaleX(1.1096);transform-origin:0 0;">Библиотека устройств</div><div class="t" style="left:352.00px;top:601.87px;line-height:17px;font-size:12.5px;color:#000;transform:scaleX(1.1056);transform-origin:0 0;">Библиотека ...</div><div class="t" style="left:452.00px;top:601.87px;line-height:17px;font-size:12.5px;color:#000;transform:scaleX(1.0249);transform-origin:0 0;">/Wo</div><svg style="left:0;top:0" width="475" height="1"><path d="M69.5 622.5 L74.0 627.0 L69.5 631.5 Z" fill="none" stroke="#000" stroke-width="1.3"/></svg><div class="t" style="left:83.00px;top:618.87px;line-height:17px;font-size:12.5px;color:#000;transform:scaleX(1.0999);transform-origin:0 0;">Шаблоны рецепта</div><div class="t" style="left:352.00px;top:618.87px;line-height:17px;font-size:12.5px;color:#000;transform:scaleX(1.1056);transform-origin:0 0;">Библиотека ...</div><div class="t" style="left:452.00px;top:618.87px;line-height:17px;font-size:12.5px;color:#000;transform:scaleX(1.0249);transform-origin:0 0;">/Wo</div><svg style="left:0;top:0" width="475" height="1"><path d="M69.5 639.5 L74.0 644.0 L69.5 648.5 Z" fill="none" stroke="#000" stroke-width="1.3"/></svg><div class="t" style="left:83.00px;top:635.87px;line-height:17px;font-size:12.5px;color:#000;">S7</div><div class="t" style="left:352.00px;top:635.87px;line-height:17px;font-size:12.5px;color:#000;transform:scaleX(1.1056);transform-origin:0 0;">Библиотека ...</div><div class="t" style="left:452.00px;top:635.87px;line-height:17px;font-size:12.5px;color:#000;transform:scaleX(1.0249);transform-origin:0 0;">/Wo</div><svg style="left:0;top:0" width="475" height="1"><path d="M67.0 658.5 L76.0 658.5 L71.5 663.5 Z" fill="none" stroke="#000" stroke-width="1.3"/></svg><div class="t" style="left:83.00px;top:652.87px;line-height:17px;font-size:12.5px;color:#000;">ZVEZDA</div><div class="t" style="left:352.00px;top:652.87px;line-height:17px;font-size:12.5px;color:#000;transform:scaleX(1.1056);transform-origin:0 0;">Библиотека ...</div><div class="t" style="left:452.00px;top:652.87px;line-height:17px;font-size:12.5px;color:#000;transform:scaleX(1.0249);transform-origin:0 0;">/Wo</div><div class="t" style="left:103.00px;top:669.87px;line-height:17px;font-size:12.5px;color:#000;transform:scaleX(0.9600);transform-origin:0 0;">DPA_ALM</div><div class="t" style="left:352.00px;top:669.87px;line-height:17px;font-size:12.5px;color:#000;transform:scaleX(1.0898);transform-origin:0 0;">Шаблон</div><div class="t" style="left:452.00px;top:669.87px;line-height:17px;font-size:12.5px;color:#000;transform:scaleX(1.0249);transform-origin:0 0;">/Wo</div><div class="t" style="left:103.00px;top:686.87px;line-height:17px;font-size:12.5px;color:#000;transform:scaleX(1.0772);transform-origin:0 0;">DigAlm</div><div class="t" style="left:352.00px;top:686.87px;line-height:17px;font-size:12.5px;color:#000;transform:scaleX(1.0898);transform-origin:0 0;">Шаблон</div><div class="t" style="left:452.00px;top:686.87px;line-height:17px;font-size:12.5px;color:#000;transform:scaleX(1.0249);transform-origin:0 0;">/Wo</div><div class="t" style="left:103.00px;top:703.87px;line-height:17px;font-size:12.5px;color:#000;transform:scaleX(0.9497);transform-origin:0 0;">GPA_ALM</div><div class="t" style="left:352.00px;top:703.87px;line-height:17px;font-size:12.5px;color:#000;transform:scaleX(1.0898);transform-origin:0 0;">Шаблон</div><div class="t" style="left:452.00px;top:703.87px;line-height:17px;font-size:12.5px;color:#000;transform:scaleX(1.0249);transform-origin:0 0;">/Wo</div><div class="t" style="left:103.00px;top:720.87px;line-height:17px;font-size:12.5px;color:#000;transform:scaleX(0.9834);transform-origin:0 0;">GPA_ALM_func</div><div class="t" style="left:352.00px;top:720.87px;line-height:17px;font-size:12.5px;color:#000;transform:scaleX(1.0898);transform-origin:0 0;">Шаблон</div><div class="t" style="left:452.00px;top:720.87px;line-height:17px;font-size:12.5px;color:#000;transform:scaleX(1.0249);transform-origin:0 0;">/Wo</div><div class="t" style="left:103.00px;top:737.87px;line-height:17px;font-size:12.5px;color:#000;transform:scaleX(1.0282);transform-origin:0 0;">S_power</div><div class="t" style="left:352.00px;top:737.87px;line-height:17px;font-size:12.5px;color:#000;transform:scaleX(1.0898);transform-origin:0 0;">Шаблон</div><div class="t" style="left:452.00px;top:737.87px;line-height:17px;font-size:12.5px;color:#000;transform:scaleX(1.0249);transform-origin:0 0;">/Wo</div><div class="t" style="left:103.00px;top:754.87px;line-height:17px;font-size:12.5px;color:#000;transform:scaleX(1.0971);transform-origin:0 0;">frequency</div><div class="t" style="left:352.00px;top:754.87px;line-height:17px;font-size:12.5px;color:#000;transform:scaleX(1.0898);transform-origin:0 0;">Шаблон</div><div class="t" style="left:452.00px;top:754.87px;line-height:17px;font-size:12.5px;color:#000;transform:scaleX(1.0249);transform-origin:0 0;">/Wo</div><svg style="left:0;top:0" width="475" height="1"><path d="M69.5 775.5 L74.0 780.0 L69.5 784.5 Z" fill="none" stroke="#000" stroke-width="1.3"/></svg><div class="t" style="left:83.00px;top:771.87px;line-height:17px;font-size:12.5px;color:#000;transform:scaleX(1.0714);transform-origin:0 0;">Базовые шаблоны</div><div class="t" style="left:352.00px;top:771.87px;line-height:17px;font-size:12.5px;color:#000;transform:scaleX(1.1056);transform-origin:0 0;">Библиотека ...</div><div class="t" style="left:452.00px;top:771.87px;line-height:17px;font-size:12.5px;color:#000;transform:scaleX(1.0249);transform-origin:0 0;">/Wo</div><svg style="left:0;top:0" width="475" height="1"><path d="M29.5 793.5 L34.0 798.0 L29.5 802.5 Z" fill="#fff" stroke="#000" stroke-width="1.3"/></svg><svg style="left:43px;top:790px" width="16" height="16" viewBox="0 0 16 16"><path d="M1 3.5 L7.5 1 L14 3.5 L14 12 L7.5 14.5 L1 12 Z" fill="#c8a060"/><path d="M1 3.5 L7.5 6 L14 3.5" fill="none" stroke="#b08040" stroke-width="0.7"/><path d="M7.5 6 L7.5 14.5" stroke="#d8c090" stroke-width="0.7"/><path d="M1.5 4 L7.5 6.3 L7.5 14 L1.5 11.7 Z" fill="#d8c0a0" opacity="0.5"/></svg><div class="t" style="left:65.00px;top:789.87px;line-height:17px;font-size:12.5px;color:#fff;transform:scaleX(1.0742);transform-origin:0 0;">Архивы</div><div class="t" style="left:352.00px;top:789.87px;line-height:17px;font-size:12.5px;color:#fff;transform:scaleX(1.0840);transform-origin:0 0;">Подсистема</div><div class="t" style="left:452.00px;top:789.87px;line-height:17px;font-size:12.5px;color:#fff;transform:scaleX(1.0249);transform-origin:0 0;">/Wo</div><svg style="left:0;top:0" width="475" height="1"><path d="M29.5 811.5 L34.0 816.0 L29.5 820.5 Z" fill="none" stroke="#000" stroke-width="1.3"/></svg><svg style="left:43px;top:808px" width="16" height="16" viewBox="0 0 16 16"><defs><radialGradient id="hg" cx="0.4" cy="0.3" r="0.8"><stop offset="0" stop-color="#a8c8ff"/><stop offset="1" stop-color="#3a78f0"/></radialGradient></defs><circle cx="7.5" cy="7.5" r="7" fill="url(#hg)" stroke="#6a9cff" stroke-width="0.6"/><path d="M5 5.5 Q5 3 7.5 3 Q10 3 10 5.5 Q10 7 8 8 L8 9.5" stroke="#fff" stroke-width="1.8" fill="none"/><circle cx="8" cy="11.8" r="1.1" fill="#fff"/></svg><div class="t" style="left:65.00px;top:807.87px;line-height:17px;font-size:12.5px;color:#000;transform:scaleX(1.0732);transform-origin:0 0;">Специальные</div><div class="t" style="left:352.00px;top:807.87px;line-height:17px;font-size:12.5px;color:#000;transform:scaleX(1.0840);transform-origin:0 0;">Подсистема</div><div class="t" style="left:452.00px;top:807.87px;line-height:17px;font-size:12.5px;color:#000;transform:scaleX(1.0249);transform-origin:0 0;">/Wo</div><svg style="left:0;top:0" width="475" height="1"><path d="M29.5 829.5 L34.0 834.0 L29.5 838.5 Z" fill="none" stroke="#000" stroke-width="1.3"/></svg><svg style="left:43px;top:826px" width="16" height="16" viewBox="0 0 16 16"><rect x="0.5" y="0.5" width="15" height="12" rx="1" fill="#eee" stroke="#aaa"/><rect x="2" y="2" width="12" height="9" fill="#4f8af0"/><rect x="4" y="13" width="8" height="2" fill="#ccc" stroke="#aaa" stroke-width="0.5"/></svg><div class="t" style="left:65.00px;top:825.87px;line-height:17px;font-size:12.5px;color:#000;transform:scaleX(1.0947);transform-origin:0 0;">Пользовательские интерфейсы</div><div class="t" style="left:352.00px;top:825.87px;line-height:17px;font-size:12.5px;color:#000;transform:scaleX(1.0840);transform-origin:0 0;">Подсистема</div><div class="t" style="left:452.00px;top:825.87px;line-height:17px;font-size:12.5px;color:#000;transform:scaleX(1.0249);transform-origin:0 0;">/Wo</div><svg style="left:43px;top:844px" width="16" height="16" viewBox="0 0 16 16"><path d="M3.5 1 L7 3 L7 7 L3.5 9 L0 7 L0 3 Z" fill="#e02020"/><path d="M11.5 1 L15 3 L15 7 L11.5 9 L8 7 L8 3 Z" fill="#ff9a00"/><path d="M7.5 5 L11 7 L11 11 L7.5 13 L4 11 L4 7 Z" fill="#30b030"/><path d="M0 3 L3.5 5 L7 3 M8 3 L11.5 5 L15 3 M4 7 L7.5 9 L11 7" stroke="#fff" stroke-width="0.5" fill="none" opacity="0.6"/></svg><div class="t" style="left:65.00px;top:843.87px;line-height:17px;font-size:12.5px;color:#000;transform:scaleX(1.0878);transform-origin:0 0;">Управление модулями</div><div class="t" style="left:352.00px;top:843.87px;line-height:17px;font-size:12.5px;color:#000;transform:scaleX(1.0840);transform-origin:0 0;">Подсистема</div><div class="t" style="left:452.00px;top:843.87px;line-height:17px;font-size:12.5px;color:#000;transform:scaleX(1.0249);transform-origin:0 0;">/Wo</div></div><div style="left:3px;top:1005px;width:495px;height:23px;background:#fff;box-shadow: inset 1px 1px #9d9991, inset -1px -1px #fff, inset 2px 2px #404040, inset -2px -2px #d4d0c8;"></div><div style="left:0px;top:1031px;width:1920px;height:1px;background:#9d9991;"></div><div class="t" style="left:5.70px;top:1034.87px;line-height:17px;font-size:12.5px;transform:scaleX(1.0724);transform-origin:0 0;">/WorkStation/sub_Archive/%2fm_arch%2fview%2fmess</div><div style="left:1858px;top:1035px;width:15px;height:16px;background:#d4d0c8;box-shadow: inset -1px -1px #404040, inset 1px 1px #d4d0c8, inset -2px -2px #9d9991, inset 2px 2px #fff;"></div><svg style="left:1858px;top:1035px" width="15" height="16" viewBox="0 0 15 16"><path d="M4 7 L11 7 L7.5 10.5 Z" fill="#000"/></svg><div class="t" style="left:1880.00px;top:1034.87px;line-height:17px;font-size:12.5px;transform:scaleX(1.2347);transform-origin:0 0;">*</div><div class="t" style="left:1893.00px;top:1034.87px;line-height:17px;font-size:12.5px;color:#ff0000;transform:scaleX(1.1176);transform-origin:0 0;">root</div><div style="left:0px;top:1053px;width:1920px;height:1px;background:#fff;"></div><div style="left:0px;top:1054px;width:1920px;height:26px;background:#d4d0c8;"></div><svg style="left:9px;top:1059px" width="16" height="16" viewBox="0 0 16 16"><g fill="#3c3c3c"><circle cx="8" cy="8" r="5.2"/><rect x="6.8" y="0" width="2.4" height="4" transform="rotate(0 8 8)"/><rect x="6.8" y="0" width="2.4" height="4" transform="rotate(45 8 8)"/><rect x="6.8" y="0" width="2.4" height="4" transform="rotate(90 8 8)"/><rect x="6.8" y="0" width="2.4" height="4" transform="rotate(135 8 8)"/><rect x="6.8" y="0" width="2.4" height="4" transform="rotate(180 8 8)"/><rect x="6.8" y="0" width="2.4" height="4" transform="rotate(225 8 8)"/><rect x="6.8" y="0" width="2.4" height="4" transform="rotate(270 8 8)"/><rect x="6.8" y="0" width="2.4" height="4" transform="rotate(315 8 8)"/></g><circle cx="8" cy="8" r="3.6" fill="#d4d0c8"/></svg><div class="t" style="left:33.00px;top:1058.87px;line-height:17px;font-size:12.5px;transform:scaleX(1.0545);transform-origin:0 0;">Menu</div><div style="left:70px;top:1056px;width:22px;height:24px;background:#d4d0c8;box-shadow: inset -1px -1px #404040, inset 1px 1px #d4d0c8, inset -2px -2px #9d9991, inset 2px 2px #fff;"></div><svg style="left:73px;top:1061px" width="16" height="16" viewBox="0 0 16 16"><rect x="0.5" y="0.5" width="15" height="14" rx="2" fill="#7cab5a" stroke="#4a7a3a"/><rect x="1" y="1" width="14" height="3" fill="#e8e8e0"/><rect x="3" y="9" width="10" height="4" fill="#3a5a2a"/></svg><svg style="left:94px;top:1058px" width="21" height="21" viewBox="0 0 21 21"><rect x="0.5" y="0.5" width="20" height="20" rx="3" fill="#eee" stroke="#aaa"/><rect x="2" y="2" width="17" height="17" fill="#201828"/><path d="M5 7 L9 9.5 L5 12" stroke="#fff" stroke-width="1.3" fill="none"/><rect x="10" y="12" width="5" height="1.3" fill="#fff"/></svg><svg style="left:117px;top:1057px" width="22" height="22" viewBox="0 0 22 22"><defs><radialGradient id="ffg" cx="0.6" cy="0.35" r="0.6"><stop offset="0" stop-color="#8fd8f0"/><stop offset="0.6" stop-color="#3a8ac8"/><stop offset="1" stop-color="#1a3a90"/></radialGradient></defs><rect x="0" y="0" width="22" height="22" rx="1.5" fill="#f0a030"/><circle cx="12" cy="10" r="9.5" fill="url(#ffg)"/><path d="M1 3 Q0 15 7 20 Q14 24 20 18 Q21 16 22 14 Q18 19 12 18 Q5 16 5 10 Q5 6 8 4 Q5 4 4 7 Q3 4 4 2 Z" fill="#e86a10"/><path d="M18 2 Q22 6 21 12" stroke="#f8d040" stroke-width="1.5" fill="none"/></svg><svg style="left:140px;top:1056px" width="24" height="24" viewBox="0 0 24 24"><defs><radialGradient id="osb3" cx="0.45" cy="0.25" r="0.75"><stop offset="0" stop-color="#b8ccff"/><stop offset="0.45" stop-color="#4f7fe8"/><stop offset="1" stop-color="#2f5cd0"/></radialGradient></defs><circle cx="12" cy="12" r="11.5" fill="url(#osb3)" stroke="#3556a8" stroke-width="0.6"/><rect x="4.5" y="4" width="11" height="6" fill="#060806" stroke="#333" stroke-width="0.6"/><rect x="6" y="5.5" width="3" height="2.5" fill="#2ea02e"/><rect x="10" y="5.5" width="3.5" height="2.5" fill="#2ea02e"/><path d="M10 10 L10 16" stroke="#333" stroke-width="0.8"/><path d="M3 16.5 L22 16.5" stroke="#e0e050" stroke-width="1.4"/><path d="M13 20 L15 14 L17 20 L19 14 L21 20" stroke="#eef" stroke-width="0.9" fill="none"/></svg><div style="left:187px;top:1058px;width:1px;height:22px;background:#fff;"></div><div style="left:188px;top:1058px;width:1px;height:22px;background:#9d9991;"></div><div style="left:190px;top:1060px;width:1px;height:18px;background:#9d9991;"></div><div style="left:191px;top:1060px;width:1px;height:18px;background:#fff;"></div><div style="left:194px;top:1056px;width:209px;height:24px;background:#d4d0c8;box-shadow: inset -1px -1px #404040, inset 1px 1px #fff, inset -2px -2px #9d9991;"></div><svg style="left:202px;top:1060px" width="16" height="16" viewBox="0 0 16 16"><rect x="0.5" y="0.5" width="15" height="15" rx="1.5" fill="#e8a070"/><circle cx="9" cy="7" r="6" fill="#8ab8dc"/><path d="M1 4 Q0 13 7 15 Q13 16 15 11 Q11 14 7 12 Q4 10 5 6 Q3 7 3 5 Z" fill="#e89050"/><path d="M13 2 Q16 5 15 10" stroke="#f0d060" stroke-width="1" fill="none"/></svg><div style="left:224px;top:1056px;width:175px;height:24px;overflow:hidden;"><div class="t" style="left:1.00px;top:3.87px;line-height:17px;font-size:12.5px;transform:scaleX(1.0457);transform-origin:0 0;">[OpenSCADA: Форум - Мо...</div></div><div style="left:403px;top:1056px;width:209px;height:24px;background:#d4d0c8;box-shadow: inset -1px -1px #404040, inset 1px 1px #fff, inset -2px -2px #9d9991;"></div><svg style="left:411px;top:1060px" width="16" height="16" viewBox="0 0 16 16"><rect x="2" y="1" width="12" height="14" fill="#f4f4f0" stroke="#aaa"/><path d="M4 4 H12 M4 7 H12 M4 10 H12" stroke="#bbb"/><path d="M10 12 L14 2" stroke="#e0a040" stroke-width="2"/></svg><div style="left:433px;top:1056px;width:175px;height:24px;overflow:hidden;"><div class="t" style="left:1.00px;top:3.87px;line-height:17px;font-size:12.5px;transform:scaleX(1.1060);transform-origin:0 0;">[*Несохранённый докум...</div></div><div style="left:612px;top:1056px;width:209px;height:24px;background:#d4d0c8;box-shadow: inset -1px -1px #404040, inset 1px 1px #fff, inset -2px -2px #9d9991;"></div><svg style="left:620px;top:1060px" width="16" height="16" viewBox="0 0 16 16"><path d="M0.5 3.5 L6 3.5 L7 5 L15.5 5 L15.5 14.5 L0.5 14.5 Z" fill="#7ec450" stroke="#4e8a2a"/></svg><div style="left:642px;top:1056px;width:175px;height:24px;overflow:hidden;"><div class="t" style="left:1.00px;top:3.87px;line-height:17px;font-size:12.5px;transform:scaleX(1.0693);transform-origin:0 0;">screenshots</div></div><div style="left:821px;top:1056px;width:209px;height:24px;background:#d4d0c8;box-shadow: inset -1px -1px #404040, inset 1px 1px #fff, inset -2px -2px #9d9991;"></div><svg style="left:829px;top:1060px" width="16" height="16" viewBox="0 0 16 16"><rect x="0.5" y="1.5" width="15" height="13" rx="2" fill="#555"/><path d="M4 5 L7 8 L4 11" stroke="#ddd" stroke-width="1.2" fill="none"/><rect x="8" y="10" width="4" height="1" fill="#ddd"/></svg><div style="left:851px;top:1056px;width:175px;height:24px;overflow:hidden;"><div class="t" style="left:1.00px;top:3.87px;line-height:17px;font-size:12.5px;transform:scaleX(1.1096);transform-origin:0 0;">[Terminal]</div></div><div style="left:1030px;top:1056px;width:209px;height:24px;background:#d4d0c8;box-shadow: inset -1px -1px #404040, inset 1px 1px #fff, inset -2px -2px #9d9991;"></div><svg style="left:1038px;top:1060px" width="16" height="16" viewBox="0 0 16 16"><rect x="2.5" y="0.5" width="12" height="15" fill="#f6f6f2" stroke="#aaa"/><rect x="0" y="1" width="3" height="14" fill="#8c4"/><path d="M5 5 H13 M5 8 H13 M5 11 H13 M9 3 V14" stroke="#bbb"/></svg><div style="left:1060px;top:1056px;width:175px;height:24px;overflow:hidden;"><div class="t" style="left:1.00px;top:3.87px;line-height:17px;font-size:12.5px;transform:scaleX(1.0904);transform-origin:0 0;">[soyuz_склейка_тегов.od...</div></div><div style="left:1239px;top:1056px;width:209px;height:24px;background-color:#fff;background-image:linear-gradient(45deg,#d4d0c8 25%,transparent 25%,transparent 75%,#d4d0c8 75%),linear-gradient(45deg,#d4d0c8 25%,transparent 25%,transparent 75%,#d4d0c8 75%);background-size:2px 2px;background-position:0 0,1px 1px;box-shadow: inset 1px 1px #404040, inset 2px 2px #9d9991, inset -1px -1px #fff;"></div><svg style="left:1247px;top:1060px" width="16" height="16" viewBox="0 0 16 16"><circle cx="8" cy="8" r="7.5" fill="#3d6ee0"/><rect x="3" y="2" width="8" height="5" fill="#143214"/><circle cx="5" cy="12" r="3.5" fill="#cbd76a"/><path d="M8 8 L14 14" stroke="#bbb" stroke-width="2"/></svg><div style="left:1269px;top:1056px;width:175px;height:24px;overflow:hidden;"><div class="t" style="left:1.00px;top:4.87px;line-height:17px;font-size:12.5px;transform:scaleX(1.0212);transform-origin:0 0;">OpenSCADA QTCfg: soyuz</div></div><div style="left:1690px;top:1058px;width:1px;height:22px;background:#9d9991;"></div><div style="left:1691px;top:1058px;width:1px;height:22px;background:#fff;"></div><div style="left:1693px;top:1060px;width:1px;height:18px;background:#9d9991;"></div><div style="left:1694px;top:1060px;width:1px;height:18px;background:#fff;"></div><svg style="left:1700px;top:1057px" width="20" height="22" viewBox="0 0 20 22"><path d="M10 1 L18 4 Q18 15 10 21 Q2 15 2 4 Z" fill="#e8e8e8" stroke="#999"/><path d="M6.5 7 L13.5 14 M13.5 7 L6.5 14" stroke="#e02020" stroke-width="2.4"/></svg><div class="t" style="left:1728.00px;top:1058.87px;line-height:17px;font-size:12.5px;transform:scaleX(1.1294);transform-origin:0 0;">ru</div><svg style="left:1748px;top:1059px" width="16" height="16" viewBox="0 0 16 16"><path d="M1 6 H4 L8 2 V14 L4 10 H1 Z" fill="#333"/><path d="M10 5 Q12 8 10 11 M12 3 Q15 8 12 13" stroke="#333" stroke-width="1.2" fill="none"/></svg><svg style="left:1770px;top:1057px" width="20" height="20" viewBox="0 0 20 20"><path d="M2 19 L8 13" stroke="#222" stroke-width="2"/><path d="M7 10 L10 13 L15 8 L12 5 Z" fill="#222"/><path d="M13 6 L18 1" stroke="#222" stroke-width="2.2"/></svg><div class="t" style="left:1797.00px;top:1058.87px;line-height:17px;font-size:12.5px;transform:scaleX(1.0967);transform-origin:0 0;">Пн., 14 апр., 09:42</div><div style="left:498px;top:88px;width:1px;height:940px;background:#fff;"></div><div style="left:503px;top:86px;width:1px;height:942px;background:#9d9991;"></div><div style="left:504px;top:87px;width:1413px;height:941px;box-shadow: inset 1px 1px #fff, inset -1px -1px #9d9991;"></div><svg style="left:517px;top:99px" width="29" height="30" viewBox="0 0 29 30"><defs><linearGradient id="cL" x1="1" y1="0" x2="0" y2="1"><stop offset="0" stop-color="#ffae10"/><stop offset="1" stop-color="#fffde0"/></linearGradient><linearGradient id="cR" x1="0" y1="0" x2="0.3" y2="1"><stop offset="0" stop-color="#ffbc20"/><stop offset="1" stop-color="#fff890"/></linearGradient><linearGradient id="cT" x1="0" y1="0" x2="0" y2="1"><stop offset="0" stop-color="#fff8d0"/><stop offset="1" stop-color="#ffe090"/></linearGradient></defs><path d="M14 0.5 L28 6 L28 23 L14 29 L0.5 23 L0.5 6 Z" fill="#b86c1c"/><path d="M1.3 6.8 L14 12 L14 28 L1.3 22.5 Z" fill="url(#cL)"/><path d="M14 12 L27.2 6.8 L27.2 22.5 L14 28 Z" fill="url(#cR)"/><path d="M1.3 6.2 L14 1.3 L27.2 6.2 L14 11.3 Z" fill="url(#cT)"/><path d="M14 3 L14 11" stroke="#e07020" stroke-width="0.7"/></svg><div class="t" style="left:1117.00px;top:100.96px;line-height:26px;font-size:19.45px;font-weight:bold;font-style:italic;transform:scaleX(1.0603);transform-origin:0 0;">Подсистема: Архивы</div><div style="left:515px;top:164px;width:1391px;height:853px;box-shadow: inset 1px 1px #fff, inset -1px -1px #000, inset -2px -2px #9d9991;"></div><div style="left:517px;top:165px;width:1388px;height:851px;box-shadow: inset 1px 1px #9d9991, inset 2px 2px #404040, inset -1px -1px #fff, inset -2px -2px #d4d0c8;"></div><div style="left:644px;top:139px;width:125px;height:25px;background:#d4d0c8;border-radius:2px 2px 0 0;box-shadow: inset 1px 1px #fff, inset -1px 0 #404040, inset -2px 0 #9d9991;"></div><div class="t" style="left:651.00px;top:142.87px;line-height:17px;font-size:12.5px;transform:scaleX(1.0935);transform-origin:0 0;">Архивы значений</div><div style="left:770px;top:139px;width:63px;height:25px;background:#d4d0c8;border-radius:2px 2px 0 0;box-shadow: inset 1px 1px #fff, inset -1px 0 #404040, inset -2px 0 #9d9991;"></div><div class="t" style="left:777.00px;top:142.87px;line-height:17px;font-size:12.5px;transform:scaleX(1.0852);transform-origin:0 0;">Модули</div><div style="left:834px;top:139px;width:65px;height:25px;background:#d4d0c8;border-radius:2px 2px 0 0;box-shadow: inset 1px 1px #fff, inset -1px 0 #404040, inset -2px 0 #9d9991;"></div><div class="t" style="left:841.00px;top:142.87px;line-height:17px;font-size:12.5px;transform:scaleX(1.0592);transform-origin:0 0;">Помощь</div><div style="left:515px;top:136px;width:129px;height:30px;background:#d4d0c8;border-radius:2px 2px 0 0;box-shadow: inset 1px 1px #fff, inset -1px 0 #404040, inset -2px 0 #9d9991;"></div><div style="left:516px;top:164px;width:127px;height:2px;background:#d4d0c8;"></div><div class="t" style="left:523.00px;top:141.87px;line-height:17px;font-size:12.5px;transform:scaleX(1.0819);transform-origin:0 0;">Архив сообщений</div><div class="t" style="left:528.00px;top:179.87px;line-height:17px;font-size:12.5px;transform:scaleX(1.0721);transform-origin:0 0;">Размер буфера сообщений:</div><div style="left:709px;top:176px;width:105px;height:23px;background:#fff;box-shadow: inset 1px 1px #9d9991, inset -1px -1px #fff, inset 2px 2px #404040, inset -2px -2px #d4d0c8;"></div><div class="t" style="left:714.70px;top:179.87px;line-height:17px;font-size:12.5px;transform:scaleX(1.0989);transform-origin:0 0;">1000</div><div style="left:801px;top:178px;width:11px;height:10px;background:#d4d0c8;box-shadow: inset -1px -1px #404040, inset 1px 1px #d4d0c8, inset -2px -2px #9d9991, inset 2px 2px #fff;"></div><div style="left:801px;top:188px;width:11px;height:9px;background:#d4d0c8;box-shadow: inset -1px -1px #404040, inset 1px 1px #d4d0c8, inset -2px -2px #9d9991, inset 2px 2px #fff;"></div><svg style="left:801px;top:178px" width="11" height="19" viewBox="0 0 11 19"><path d="M3 6 L8 6 L5.5 3.5 Z" fill="#000"/><path d="M3 12 L8 12 L5.5 14.5 Z" fill="#000"/></svg><div class="t" style="left:528.00px;top:205.87px;line-height:17px;font-size:12.5px;transform:scaleX(1.0934);transform-origin:0 0;">Период архивирования (с):</div><div style="left:706px;top:202px;width:105px;height:23px;background:#fff;box-shadow: inset 1px 1px #9d9991, inset -1px -1px #fff, inset 2px 2px #404040, inset -2px -2px #d4d0c8;"></div><div class="t" style="left:711.70px;top:205.87px;line-height:17px;font-size:12.5px;transform:scaleX(1.0989);transform-origin:0 0;">1</div><div style="left:798px;top:204px;width:11px;height:10px;background:#d4d0c8;box-shadow: inset -1px -1px #404040, inset 1px 1px #d4d0c8, inset -2px -2px #9d9991, inset 2px 2px #fff;"></div><div style="left:798px;top:214px;width:11px;height:9px;background:#d4d0c8;box-shadow: inset -1px -1px #404040, inset 1px 1px #d4d0c8, inset -2px -2px #9d9991, inset 2px 2px #fff;"></div><svg style="left:798px;top:204px" width="11" height="19" viewBox="0 0 11 19"><path d="M3 6 L8 6 L5.5 3.5 Z" fill="#000"/><path d="M3 12 L8 12 L5.5 14.5 Z" fill="#000"/></svg><div class="t" style="left:528.00px;top:228.87px;line-height:17px;font-size:12.5px;font-weight:bold;transform:scaleX(1.1127);transform-origin:0 0;">Просмотр сообщений</div><div class="t" style="left:539.00px;top:250.87px;line-height:17px;font-size:12.5px;transform:scaleX(1.0605);transform-origin:0 0;">Время:</div><div style="left:589px;top:247px;width:157px;height:23px;background:#fff;box-shadow: inset 1px 1px #9d9991, inset -1px -1px #fff, inset 2px 2px #404040, inset -2px -2px #d4d0c8;"></div><div style="left:591px;top:249px;width:129px;height:19px;overflow:hidden;"><div class="t" style="left:3.20px;top:1.67px;line-height:17px;font-size:12.5px;transform:scaleX(1.0988);transform-origin:0 0;">14-04-2014 09:42:14</div></div><div style="left:721px;top:249px;width:23px;height:19px;background:#d4d0c8;box-shadow: inset -1px -1px #404040, inset 1px 1px #d4d0c8, inset -2px -2px #9d9991, inset 2px 2px #fff;"></div><svg style="left:721px;top:249px" width="23" height="19" viewBox="0 0 23 19"><path d="M7.5 8.0 L14.5 8.0 L11 11.5 Z" fill="#000"/></svg><div class="t" style="left:539.00px;top:276.87px;line-height:17px;font-size:12.5px;transform:scaleX(1.0860);transform-origin:0 0;">Размер (сек):</div><div style="left:629px;top:273px;width:106px;height:23px;background:#fff;box-shadow: inset 1px 1px #9d9991, inset -1px -1px #fff, inset 2px 2px #404040, inset -2px -2px #d4d0c8;"></div><div class="t" style="left:634.70px;top:276.87px;line-height:17px;font-size:12.5px;transform:scaleX(1.0989);transform-origin:0 0;">60</div><div style="left:722px;top:275px;width:11px;height:10px;background:#d4d0c8;box-shadow: inset -1px -1px #404040, inset 1px 1px #d4d0c8, inset -2px -2px #9d9991, inset 2px 2px #fff;"></div><div style="left:722px;top:285px;width:11px;height:9px;background:#d4d0c8;box-shadow: inset -1px -1px #404040, inset 1px 1px #d4d0c8, inset -2px -2px #9d9991, inset 2px 2px #fff;"></div><svg style="left:722px;top:275px" width="11" height="19" viewBox="0 0 11 19"><path d="M3 6 L8 6 L5.5 3.5 Z" fill="#000"/><path d="M3 12 L8 12 L5.5 14.5 Z" fill="#000"/></svg><div class="t" style="left:539.00px;top:302.87px;line-height:17px;font-size:12.5px;transform:scaleX(1.1253);transform-origin:0 0;">Шаблон категории:</div><div style="left:669px;top:299px;width:1221px;height:23px;background:#fff;box-shadow: inset 1px 1px #9d9991, inset -1px -1px #fff, inset 2px 2px #404040, inset -2px -2px #d4d0c8;"></div><div class="t" style="left:539.00px;top:330.87px;line-height:17px;font-size:12.5px;transform:scaleX(1.0793);transform-origin:0 0;">Уровень:</div><div style="left:601px;top:325px;width:262px;height:27px;background:#fff;box-shadow: inset 1px 1px #9d9991, inset -1px -1px #fff, inset 2px 2px #404040, inset -2px -2px #d4d0c8;"></div><div style="left:603px;top:327px;width:232px;height:23px;overflow:hidden;"><div class="t" style="left:4.50px;top:3.67px;line-height:17px;font-size:12.5px;transform:scaleX(1.1036);transform-origin:0 0;">Отладка (0)</div></div><div style="left:837px;top:327px;width:24px;height:23px;background:#d4d0c8;box-shadow: inset -1px -1px #404040, inset 1px 1px #d4d0c8, inset -2px -2px #9d9991, inset 2px 2px #fff;"></div><svg style="left:837px;top:327px" width="24" height="23" viewBox="0 0 24 23"><path d="M7.5 10.0 L14.5 10.0 L11 13.5 Z" fill="#000"/></svg><div class="t" style="left:539.00px;top:360.87px;line-height:17px;font-size:12.5px;transform:scaleX(1.1032);transform-origin:0 0;">Архиватор:</div><div style="left:617px;top:355px;width:129px;height:27px;background:#fff;box-shadow: inset 1px 1px #9d9991, inset -1px -1px #fff, inset 2px 2px #404040, inset -2px -2px #d4d0c8;"></div><div style="left:721px;top:357px;width:23px;height:23px;background:#d4d0c8;box-shadow: inset -1px -1px #404040, inset 1px 1px #d4d0c8, inset -2px -2px #9d9991, inset 2px 2px #fff;"></div><svg style="left:721px;top:357px" width="23" height="23" viewBox="0 0 23 23"><path d="M7.5 10.0 L14.5 10.0 L11 13.5 Z" fill="#000"/></svg><div class="t" style="left:539.00px;top:384.87px;line-height:17px;font-size:12.5px;transform:scaleX(1.0666);transform-origin:0 0;">Сообщения:</div><div style="left:539px;top:403px;width:1350px;height:595px;border:1px solid #c4c0b8;border-left-color:#9d9991;border-top-color:#9d9991;"></div><div style="left:539px;top:403px;width:1350px;height:1px;background:#9d9991;"></div><div style="left:540px;top:404px;width:1348px;height:1px;background:#d4d0c8;"></div><div style="left:567px;top:428px;width:1305px;height:569px;background:#fff;"></div><div style="left:541px;top:405px;width:26px;height:592px;background:#d4d0c8;"></div><div style="left:541px;top:405px;width:1331px;height:23px;background:#d4d0c8;"></div><div style="left:541px;top:405px;width:26px;height:23px;background:#d4d0c8;box-shadow: inset -1px -1px #404040, inset 0 1px #fff, inset 1px 0 #e4e0d8, inset -2px -2px #9d9991;"></div><div style="left:567px;top:405px;width:141px;height:23px;background:#d4d0c8;box-shadow: inset -1px -1px #404040, inset 0 1px #fff, inset 1px 0 #e4e0d8, inset -2px -2px #9d9991;"></div><div class="t" style="left:617.74px;top:408.87px;line-height:17px;font-size:12.5px;transform:scaleX(1.0507);transform-origin:0 0;">Время</div><div style="left:708px;top:405px;width:59px;height:23px;background:#d4d0c8;box-shadow: inset -1px -1px #404040, inset 0 1px #fff, inset 1px 0 #e4e0d8, inset -2px -2px #9d9991;"></div><div class="t" style="left:726.05px;top:408.87px;line-height:17px;font-size:12.5px;transform:scaleX(1.1192);transform-origin:0 0;">мкс</div><div style="left:767px;top:405px;width:295px;height:23px;background:#d4d0c8;box-shadow: inset -1px -1px #404040, inset 0 1px #fff, inset 1px 0 #e4e0d8, inset -2px -2px #9d9991;"></div><div class="t" style="left:881.23px;top:408.87px;line-height:17px;font-size:12.5px;transform:scaleX(1.1391);transform-origin:0 0;">Категория</div><div style="left:1062px;top:405px;width:31px;height:23px;background:#d4d0c8;box-shadow: inset -1px -1px #404040, inset 0 1px #fff, inset 1px 0 #e4e0d8, inset -2px -2px #9d9991;"></div><div class="t" style="left:1068.12px;top:408.87px;line-height:17px;font-size:12.5px;transform:scaleX(1.0536);transform-origin:0 0;">Ур.</div><div style="left:1093px;top:405px;width:600px;height:23px;background:#d4d0c8;box-shadow: inset -1px -1px #404040, inset 0 1px #fff, inset 1px 0 #e4e0d8, inset -2px -2px #9d9991;"></div><div class="t" style="left:1356.91px;top:408.87px;line-height:17px;font-size:12.5px;transform:scaleX(1.0611);transform-origin:0 0;">Сообщение</div><div style="left:541px;top:428px;width:1331px;height:569px;overflow:hidden;"><div style="left:0px;top:0px;width:26px;height:22px;background:#d4d0c8;box-shadow: inset 0 1px #fff;"></div><div style="left:0px;top:22px;width:26px;height:1px;background:#404040;"></div><div style="left:26px;top:22px;width:1126px;height:1px;background:#c0c0c0;"></div><div class="t" style="left:3.70px;top:3.87px;line-height:17px;font-size:12.5px;transform:scaleX(1.0989);transform-origin:0 0;">1</div><div class="t" style="left:28.70px;top:3.87px;line-height:17px;font-size:12.5px;transform:scaleX(1.1076);transform-origin:0 0;">14-04-2014 09:42:11</div><div class="t" style="left:169.70px;top:3.87px;line-height:17px;font-size:12.5px;transform:scaleX(1.0989);transform-origin:0 0;">153168</div><div class="t" style="left:228.70px;top:3.87px;line-height:17px;font-size:12.5px;transform:scaleX(1.1326);transform-origin:0 0;">test6</div><div class="t" style="left:523.70px;top:3.87px;line-height:17px;font-size:12.5px;transform:scaleX(1.0989);transform-origin:0 0;">7</div><div class="t" style="left:554.70px;top:3.87px;line-height:17px;font-size:12.5px;transform:scaleX(1.0588);transform-origin:0 0;">messEmerg</div><div style="left:0px;top:23px;width:26px;height:22px;background:#d4d0c8;box-shadow: inset 0 1px #fff;"></div><div style="left:0px;top:45px;width:26px;height:1px;background:#404040;"></div><div style="left:26px;top:45px;width:1126px;height:1px;background:#c0c0c0;"></div><div class="t" style="left:3.70px;top:26.87px;line-height:17px;font-size:12.5px;transform:scaleX(1.0989);transform-origin:0 0;">2</div><div class="t" style="left:28.70px;top:26.87px;line-height:17px;font-size:12.5px;transform:scaleX(1.1076);transform-origin:0 0;">14-04-2014 09:42:11</div><div class="t" style="left:169.70px;top:26.87px;line-height:17px;font-size:12.5px;transform:scaleX(1.0989);transform-origin:0 0;">153152</div><div class="t" style="left:228.70px;top:26.87px;line-height:17px;font-size:12.5px;transform:scaleX(1.1326);transform-origin:0 0;">test6</div><div class="t" style="left:523.70px;top:26.87px;line-height:17px;font-size:12.5px;transform:scaleX(1.0989);transform-origin:0 0;">6</div><div class="t" style="left:554.70px;top:26.87px;line-height:17px;font-size:12.5px;transform:scaleX(1.0824);transform-origin:0 0;">messAlert</div><div style="left:0px;top:46px;width:26px;height:22px;background:#d4d0c8;box-shadow: inset 0 1px #fff;"></div><div style="left:0px;top:68px;width:26px;height:1px;background:#404040;"></div><div style="left:26px;top:68px;width:1126px;height:1px;background:#c0c0c0;"></div><div class="t" style="left:3.70px;top:49.87px;line-height:17px;font-size:12.5px;transform:scaleX(1.0989);transform-origin:0 0;">3</div><div class="t" style="left:28.70px;top:49.87px;line-height:17px;font-size:12.5px;transform:scaleX(1.1076);transform-origin:0 0;">14-04-2014 09:42:11</div><div class="t" style="left:169.70px;top:49.87px;line-height:17px;font-size:12.5px;transform:scaleX(1.0989);transform-origin:0 0;">153136</div><div class="t" style="left:228.70px;top:49.87px;line-height:17px;font-size:12.5px;transform:scaleX(1.1326);transform-origin:0 0;">test6</div><div class="t" style="left:523.70px;top:49.87px;line-height:17px;font-size:12.5px;transform:scaleX(1.0989);transform-origin:0 0;">5</div><div class="t" style="left:554.70px;top:49.87px;line-height:17px;font-size:12.5px;transform:scaleX(1.0735);transform-origin:0 0;">messCrit</div><div style="left:0px;top:69px;width:26px;height:22px;background:#d4d0c8;box-shadow: inset 0 1px #fff;"></div><div style="left:0px;top:91px;width:26px;height:1px;background:#404040;"></div><div style="left:26px;top:91px;width:1126px;height:1px;background:#c0c0c0;"></div><div class="t" style="left:3.70px;top:72.87px;line-height:17px;font-size:12.5px;transform:scaleX(1.0989);transform-origin:0 0;">4</div><div class="t" style="left:28.70px;top:72.87px;line-height:17px;font-size:12.5px;transform:scaleX(1.1076);transform-origin:0 0;">14-04-2014 09:42:11</div><div class="t" style="left:169.70px;top:72.87px;line-height:17px;font-size:12.5px;transform:scaleX(1.0989);transform-origin:0 0;">153120</div><div class="t" style="left:228.70px;top:72.87px;line-height:17px;font-size:12.5px;transform:scaleX(1.1326);transform-origin:0 0;">test6</div><div class="t" style="left:523.70px;top:72.87px;line-height:17px;font-size:12.5px;transform:scaleX(1.0989);transform-origin:0 0;">4</div><div class="t" style="left:554.70px;top:72.87px;line-height:17px;font-size:12.5px;transform:scaleX(1.0497);transform-origin:0 0;">messErr</div><div style="left:0px;top:92px;width:26px;height:22px;background:#d4d0c8;box-shadow: inset 0 1px #fff;"></div><div style="left:0px;top:114px;width:26px;height:1px;background:#404040;"></div><div style="left:26px;top:114px;width:1126px;height:1px;background:#c0c0c0;"></div><div class="t" style="left:3.70px;top:95.87px;line-height:17px;font-size:12.5px;transform:scaleX(1.0989);transform-origin:0 0;">5</div><div class="t" style="left:28.70px;top:95.87px;line-height:17px;font-size:12.5px;transform:scaleX(1.1076);transform-origin:0 0;">14-04-2014 09:42:11</div><div class="t" style="left:169.70px;top:95.87px;line-height:17px;font-size:12.5px;transform:scaleX(1.0989);transform-origin:0 0;">153086</div><div class="t" style="left:228.70px;top:95.87px;line-height:17px;font-size:12.5px;transform:scaleX(1.1326);transform-origin:0 0;">test6</div><div class="t" style="left:523.70px;top:95.87px;line-height:17px;font-size:12.5px;transform:scaleX(1.0989);transform-origin:0 0;">3</div><div class="t" style="left:554.70px;top:95.87px;line-height:17px;font-size:12.5px;transform:scaleX(1.0658);transform-origin:0 0;">messWarning</div><div style="left:0px;top:115px;width:26px;height:22px;background:#d4d0c8;box-shadow: inset 0 1px #fff;"></div><div style="left:0px;top:137px;width:26px;height:1px;background:#404040;"></div><div style="left:26px;top:137px;width:1126px;height:1px;background:#c0c0c0;"></div><div class="t" style="left:3.70px;top:118.87px;line-height:17px;font-size:12.5px;transform:scaleX(1.0989);transform-origin:0 0;">6</div><div class="t" style="left:28.70px;top:118.87px;line-height:17px;font-size:12.5px;transform:scaleX(1.1076);transform-origin:0 0;">14-04-2014 09:42:11</div><div class="t" style="left:169.70px;top:118.87px;line-height:17px;font-size:12.5px;transform:scaleX(1.0989);transform-origin:0 0;">153064</div><div class="t" style="left:228.70px;top:118.87px;line-height:17px;font-size:12.5px;transform:scaleX(1.1326);transform-origin:0 0;">test6</div><div class="t" style="left:523.70px;top:118.87px;line-height:17px;font-size:12.5px;transform:scaleX(1.0989);transform-origin:0 0;">2</div><div class="t" style="left:554.70px;top:118.87px;line-height:17px;font-size:12.5px;transform:scaleX(1.0664);transform-origin:0 0;">messNote</div><div style="left:0px;top:138px;width:26px;height:22px;background:#d4d0c8;box-shadow: inset 0 1px #fff;"></div><div style="left:0px;top:160px;width:26px;height:1px;background:#404040;"></div><div style="left:26px;top:160px;width:1126px;height:1px;background:#c0c0c0;"></div><div class="t" style="left:3.70px;top:141.87px;line-height:17px;font-size:12.5px;transform:scaleX(1.0989);transform-origin:0 0;">7</div><div class="t" style="left:28.70px;top:141.87px;line-height:17px;font-size:12.5px;transform:scaleX(1.1076);transform-origin:0 0;">14-04-2014 09:42:11</div><div class="t" style="left:169.70px;top:141.87px;line-height:17px;font-size:12.5px;transform:scaleX(1.0989);transform-origin:0 0;">153033</div><div class="t" style="left:228.70px;top:141.87px;line-height:17px;font-size:12.5px;transform:scaleX(1.1326);transform-origin:0 0;">test6</div><div class="t" style="left:523.70px;top:141.87px;line-height:17px;font-size:12.5px;transform:scaleX(1.0989);transform-origin:0 0;">1</div><div class="t" style="left:554.70px;top:141.87px;line-height:17px;font-size:12.5px;transform:scaleX(1.0709);transform-origin:0 0;">messInfo</div><div style="left:0px;top:161px;width:26px;height:22px;background:#d4d0c8;box-shadow: inset 0 1px #fff;"></div><div style="left:0px;top:183px;width:26px;height:1px;background:#404040;"></div><div style="left:26px;top:183px;width:1126px;height:1px;background:#c0c0c0;"></div><div class="t" style="left:3.70px;top:164.87px;line-height:17px;font-size:12.5px;transform:scaleX(1.0989);transform-origin:0 0;">8</div><div class="t" style="left:28.70px;top:164.87px;line-height:17px;font-size:12.5px;transform:scaleX(1.1076);transform-origin:0 0;">14-04-2014 09:42:11</div><div class="t" style="left:169.70px;top:164.87px;line-height:17px;font-size:12.5px;transform:scaleX(1.0989);transform-origin:0 0;">152633</div><div class="t" style="left:228.70px;top:164.87px;line-height:17px;font-size:12.5px;transform:scaleX(1.0238);transform-origin:0 0;">/sub_UI/mod_QTCfg/</div><div class="t" style="left:523.70px;top:164.87px;line-height:17px;font-size:12.5px;transform:scaleX(1.0989);transform-origin:0 0;">1</div><div class="t" style="left:554.70px;top:164.87px;line-height:17px;font-size:12.5px;transform:scaleX(1.0556);transform-origin:0 0;">root| Нажат &#x27;/WorkStation/sub_DAQ/mod_JavaLikeCalc/lib_ZVEZDA_LIB/fnc_test6/%2fexec%2fca...</div><div style="left:0px;top:184px;width:26px;height:30px;background:#d4d0c8;box-shadow: inset 0 1px #fff;"></div><div style="left:0px;top:214px;width:26px;height:1px;background:#404040;"></div><div style="left:26px;top:214px;width:1126px;height:1px;background:#c0c0c0;"></div><div class="t" style="left:3.70px;top:192.37px;line-height:17px;font-size:12.5px;transform:scaleX(1.0989);transform-origin:0 0;">9</div><div class="t" style="left:28.70px;top:192.37px;line-height:17px;font-size:12.5px;transform:scaleX(1.0988);transform-origin:0 0;">14-04-2014 09:42:09</div><div class="t" style="left:169.70px;top:192.37px;line-height:17px;font-size:12.5px;transform:scaleX(1.0989);transform-origin:0 0;">246340</div><div class="t" style="left:228.70px;top:192.37px;line-height:17px;font-size:12.5px;transform:scaleX(1.0238);transform-origin:0 0;">/sub_UI/mod_QTCfg/</div><div class="t" style="left:523.70px;top:192.37px;line-height:17px;font-size:12.5px;transform:scaleX(1.0989);transform-origin:0 0;">1</div><div class="t" style="left:554.70px;top:184.37px;line-height:17px;font-size:12.5px;transform:scaleX(1.1031);transform-origin:0 0;">root| Установлен</div><div class="t" style="left:554.70px;top:199.37px;line-height:17px;font-size:12.5px;transform:scaleX(1.0535);transform-origin:0 0;">&#x27;/WorkStation/sub_DAQ/mod_JavaLikeCalc/lib_ZVEZDA_LIB/fnc_test6/%2fexec%2fen&#x27; в &#x27;1&#x27;!</div><div style="left:0px;top:215px;width:26px;height:22px;background:#d4d0c8;box-shadow: inset 0 1px #fff;"></div><div style="left:0px;top:237px;width:26px;height:1px;background:#404040;"></div><div style="left:26px;top:237px;width:1126px;height:1px;background:#c0c0c0;"></div><div class="t" style="left:3.70px;top:218.87px;line-height:17px;font-size:12.5px;transform:scaleX(1.0989);transform-origin:0 0;">10</div><div class="t" style="left:28.70px;top:218.87px;line-height:17px;font-size:12.5px;transform:scaleX(1.0988);transform-origin:0 0;">14-04-2014 09:42:09</div><div class="t" style="left:169.70px;top:218.87px;line-height:17px;font-size:12.5px;transform:scaleX(1.1237);transform-origin:0 0;">189116</div><div class="t" style="left:228.70px;top:218.87px;line-height:17px;font-size:12.5px;transform:scaleX(1.0376);transform-origin:0 0;">/sub_DAQ/mod_JavaLikeCalc/cntr_prescr/</div><div class="t" style="left:523.70px;top:218.87px;line-height:17px;font-size:12.5px;transform:scaleX(1.0989);transform-origin:0 0;">1</div><div class="t" style="left:554.70px;top:218.87px;line-height:17px;font-size:12.5px;transform:scaleX(1.1072);transform-origin:0 0;">Сохранение конфигурации контроллера!</div><div style="left:0px;top:238px;width:26px;height:22px;background:#d4d0c8;box-shadow: inset 0 1px #fff;"></div><div style="left:0px;top:260px;width:26px;height:1px;background:#404040;"></div><div style="left:26px;top:260px;width:1126px;height:1px;background:#c0c0c0;"></div><div class="t" style="left:3.70px;top:241.87px;line-height:17px;font-size:12.5px;transform:scaleX(1.1769);transform-origin:0 0;">11</div><div class="t" style="left:28.70px;top:241.87px;line-height:17px;font-size:12.5px;transform:scaleX(1.0988);transform-origin:0 0;">14-04-2014 09:42:09</div><div class="t" style="left:169.70px;top:241.87px;line-height:17px;font-size:12.5px;transform:scaleX(1.0989);transform-origin:0 0;">187456</div><div class="t" style="left:228.70px;top:241.87px;line-height:17px;font-size:12.5px;transform:scaleX(1.0302);transform-origin:0 0;">/sub_DAQ/mod_JavaLikeCalc/cntr_LocVars/</div><div class="t" style="left:523.70px;top:241.87px;line-height:17px;font-size:12.5px;transform:scaleX(1.0989);transform-origin:0 0;">1</div><div class="t" style="left:554.70px;top:241.87px;line-height:17px;font-size:12.5px;transform:scaleX(1.1072);transform-origin:0 0;">Сохранение конфигурации контроллера!</div><div style="left:0px;top:261px;width:26px;height:22px;background:#d4d0c8;box-shadow: inset 0 1px #fff;"></div><div style="left:0px;top:283px;width:26px;height:1px;background:#404040;"></div><div style="left:26px;top:283px;width:1126px;height:1px;background:#c0c0c0;"></div><div class="t" style="left:3.70px;top:264.87px;line-height:17px;font-size:12.5px;transform:scaleX(1.0989);transform-origin:0 0;">12</div><div class="t" style="left:28.70px;top:264.87px;line-height:17px;font-size:12.5px;transform:scaleX(1.0988);transform-origin:0 0;">14-04-2014 09:41:38</div><div class="t" style="left:169.70px;top:264.87px;line-height:17px;font-size:12.5px;transform:scaleX(1.1237);transform-origin:0 0;">731311</div><div class="t" style="left:228.70px;top:264.87px;line-height:17px;font-size:12.5px;transform:scaleX(1.0173);transform-origin:0 0;">/sub_UI/mod_VCAEngine/prj_SOYUZ/</div><div class="t" style="left:523.70px;top:264.87px;line-height:17px;font-size:12.5px;transform:scaleX(1.0989);transform-origin:0 0;">1</div><div class="t" style="left:554.70px;top:264.87px;line-height:17px;font-size:12.5px;transform:scaleX(1.1282);transform-origin:0 0;">Загрузка проекта.</div><div style="left:0px;top:284px;width:26px;height:22px;background:#d4d0c8;box-shadow: inset 0 1px #fff;"></div><div style="left:0px;top:306px;width:26px;height:1px;background:#404040;"></div><div style="left:26px;top:306px;width:1126px;height:1px;background:#c0c0c0;"></div><div class="t" style="left:3.70px;top:287.87px;line-height:17px;font-size:12.5px;transform:scaleX(1.0989);transform-origin:0 0;">13</div><div class="t" style="left:28.70px;top:287.87px;line-height:17px;font-size:12.5px;transform:scaleX(1.0988);transform-origin:0 0;">14-04-2014 09:41:38</div><div class="t" style="left:169.70px;top:287.87px;line-height:17px;font-size:12.5px;transform:scaleX(1.0989);transform-origin:0 0;">730490</div><div class="t" style="left:228.70px;top:287.87px;line-height:17px;font-size:12.5px;transform:scaleX(1.0388);transform-origin:0 0;">/sub_UI/mod_VCAEngine/wlb_zvezda_pages/</div><div class="t" style="left:523.70px;top:287.87px;line-height:17px;font-size:12.5px;transform:scaleX(1.0989);transform-origin:0 0;">1</div><div class="t" style="left:554.70px;top:287.87px;line-height:17px;font-size:12.5px;transform:scaleX(1.1288);transform-origin:0 0;">Загрузка библиотеки виджетов.</div><div style="left:0px;top:307px;width:26px;height:22px;background:#d4d0c8;box-shadow: inset 0 1px #fff;"></div><div style="left:0px;top:329px;width:26px;height:1px;background:#404040;"></div><div style="left:26px;top:329px;width:1126px;height:1px;background:#c0c0c0;"></div><div class="t" style="left:3.70px;top:310.87px;line-height:17px;font-size:12.5px;transform:scaleX(1.0989);transform-origin:0 0;">14</div><div class="t" style="left:28.70px;top:310.87px;line-height:17px;font-size:12.5px;transform:scaleX(1.0988);transform-origin:0 0;">14-04-2014 09:41:38</div><div class="t" style="left:169.70px;top:310.87px;line-height:17px;font-size:12.5px;transform:scaleX(1.0989);transform-origin:0 0;">728436</div><div class="t" style="left:228.70px;top:310.87px;line-height:17px;font-size:12.5px;transform:scaleX(1.0282);transform-origin:0 0;">/sub_UI/mod_VCAEngine/wlb_ZVEZDA/</div><div class="t" style="left:523.70px;top:310.87px;line-height:17px;font-size:12.5px;transform:scaleX(1.0989);transform-origin:0 0;">1</div><div class="t" style="left:554.70px;top:310.87px;line-height:17px;font-size:12.5px;transform:scaleX(1.1288);transform-origin:0 0;">Загрузка библиотеки виджетов.</div><div style="left:0px;top:330px;width:26px;height:22px;background:#d4d0c8;box-shadow: inset 0 1px #fff;"></div><div style="left:0px;top:352px;width:26px;height:1px;background:#404040;"></div><div style="left:26px;top:352px;width:1126px;height:1px;background:#c0c0c0;"></div><div class="t" style="left:3.70px;top:333.87px;line-height:17px;font-size:12.5px;transform:scaleX(1.0989);transform-origin:0 0;">15</div><div class="t" style="left:28.70px;top:333.87px;line-height:17px;font-size:12.5px;transform:scaleX(1.0988);transform-origin:0 0;">14-04-2014 09:41:38</div><div class="t" style="left:169.70px;top:333.87px;line-height:17px;font-size:12.5px;transform:scaleX(1.0989);transform-origin:0 0;">727853</div><div class="t" style="left:228.70px;top:333.87px;line-height:17px;font-size:12.5px;transform:scaleX(1.0486);transform-origin:0 0;">/sub_UI/mod_VCAEngine/wlb_originals/</div><div class="t" style="left:523.70px;top:333.87px;line-height:17px;font-size:12.5px;transform:scaleX(1.0989);transform-origin:0 0;">1</div><div class="t" style="left:554.70px;top:333.87px;line-height:17px;font-size:12.5px;transform:scaleX(1.1189);transform-origin:0 0;">Отключение библиотеки виджетов.</div><div style="left:0px;top:353px;width:26px;height:22px;background:#d4d0c8;box-shadow: inset 0 1px #fff;"></div><div style="left:0px;top:375px;width:26px;height:1px;background:#404040;"></div><div style="left:26px;top:375px;width:1126px;height:1px;background:#c0c0c0;"></div><div class="t" style="left:3.70px;top:356.87px;line-height:17px;font-size:12.5px;transform:scaleX(1.0989);transform-origin:0 0;">16</div><div class="t" style="left:28.70px;top:356.87px;line-height:17px;font-size:12.5px;transform:scaleX(1.0988);transform-origin:0 0;">14-04-2014 09:41:38</div><div class="t" style="left:169.70px;top:356.87px;line-height:17px;font-size:12.5px;transform:scaleX(1.0989);transform-origin:0 0;">727287</div><div class="t" style="left:228.70px;top:356.87px;line-height:17px;font-size:12.5px;transform:scaleX(1.0315);transform-origin:0 0;">/sub_UI/mod_VCAEngine/</div><div class="t" style="left:523.70px;top:356.87px;line-height:17px;font-size:12.5px;transform:scaleX(1.0989);transform-origin:0 0;">1</div><div class="t" style="left:554.70px;top:356.87px;line-height:17px;font-size:12.5px;transform:scaleX(1.1129);transform-origin:0 0;">Загрузка модуля.</div><div style="left:0px;top:376px;width:26px;height:22px;background:#d4d0c8;box-shadow: inset 0 1px #fff;"></div><div style="left:0px;top:398px;width:26px;height:1px;background:#404040;"></div><div style="left:26px;top:398px;width:1126px;height:1px;background:#c0c0c0;"></div><div class="t" style="left:3.70px;top:379.87px;line-height:17px;font-size:12.5px;transform:scaleX(1.0989);transform-origin:0 0;">17</div><div class="t" style="left:28.70px;top:379.87px;line-height:17px;font-size:12.5px;transform:scaleX(1.0988);transform-origin:0 0;">14-04-2014 09:41:38</div><div class="t" style="left:169.70px;top:379.87px;line-height:17px;font-size:12.5px;transform:scaleX(1.0989);transform-origin:0 0;">696954</div><div class="t" style="left:228.70px;top:379.87px;line-height:17px;font-size:12.5px;transform:scaleX(1.0149);transform-origin:0 0;">/sub_DAQ/mod_ModBus/cntr_BR_PLC/</div><div class="t" style="left:523.70px;top:379.87px;line-height:17px;font-size:12.5px;transform:scaleX(1.0989);transform-origin:0 0;">1</div><div class="t" style="left:554.70px;top:379.87px;line-height:17px;font-size:12.5px;transform:scaleX(1.1223);transform-origin:0 0;">Загрузка конфигурации контроллера!</div><div style="left:0px;top:399px;width:26px;height:22px;background:#d4d0c8;box-shadow: inset 0 1px #fff;"></div><div style="left:0px;top:421px;width:26px;height:1px;background:#404040;"></div><div style="left:26px;top:421px;width:1126px;height:1px;background:#c0c0c0;"></div><div class="t" style="left:3.70px;top:402.87px;line-height:17px;font-size:12.5px;transform:scaleX(1.0989);transform-origin:0 0;">18</div><div class="t" style="left:28.70px;top:402.87px;line-height:17px;font-size:12.5px;transform:scaleX(1.0988);transform-origin:0 0;">14-04-2014 09:41:38</div><div class="t" style="left:169.70px;top:402.87px;line-height:17px;font-size:12.5px;transform:scaleX(1.0989);transform-origin:0 0;">613792</div><div class="t" style="left:228.70px;top:402.87px;line-height:17px;font-size:12.5px;">/sub_DAQ/mod_JavaLikeCalc/cntr_SYNC_SRV/</div><div class="t" style="left:523.70px;top:402.87px;line-height:17px;font-size:12.5px;transform:scaleX(1.0989);transform-origin:0 0;">1</div><div class="t" style="left:554.70px;top:402.87px;line-height:17px;font-size:12.5px;transform:scaleX(1.1223);transform-origin:0 0;">Загрузка конфигурации контроллера!</div><div style="left:0px;top:422px;width:26px;height:22px;background:#d4d0c8;box-shadow: inset 0 1px #fff;"></div><div style="left:0px;top:444px;width:26px;height:1px;background:#404040;"></div><div style="left:26px;top:444px;width:1126px;height:1px;background:#c0c0c0;"></div><div class="t" style="left:3.70px;top:425.87px;line-height:17px;font-size:12.5px;transform:scaleX(1.0989);transform-origin:0 0;">19</div><div class="t" style="left:28.70px;top:425.87px;line-height:17px;font-size:12.5px;transform:scaleX(1.0988);transform-origin:0 0;">14-04-2014 09:41:38</div><div class="t" style="left:169.70px;top:425.87px;line-height:17px;font-size:12.5px;transform:scaleX(1.0989);transform-origin:0 0;">602989</div><div class="t" style="left:228.70px;top:425.87px;line-height:17px;font-size:12.5px;transform:scaleX(1.0302);transform-origin:0 0;">/sub_DAQ/mod_JavaLikeCalc/cntr_LocVars/</div><div class="t" style="left:523.70px;top:425.87px;line-height:17px;font-size:12.5px;transform:scaleX(1.0989);transform-origin:0 0;">1</div><div class="t" style="left:554.70px;top:425.87px;line-height:17px;font-size:12.5px;transform:scaleX(1.1223);transform-origin:0 0;">Загрузка конфигурации контроллера!</div><div style="left:0px;top:445px;width:26px;height:22px;background:#d4d0c8;box-shadow: inset 0 1px #fff;"></div><div style="left:0px;top:467px;width:26px;height:1px;background:#404040;"></div><div style="left:26px;top:467px;width:1126px;height:1px;background:#c0c0c0;"></div><div class="t" style="left:3.70px;top:448.87px;line-height:17px;font-size:12.5px;transform:scaleX(1.0989);transform-origin:0 0;">20</div><div class="t" style="left:28.70px;top:448.87px;line-height:17px;font-size:12.5px;transform:scaleX(1.0988);transform-origin:0 0;">14-04-2014 09:41:38</div><div class="t" style="left:169.70px;top:448.87px;line-height:17px;font-size:12.5px;transform:scaleX(1.0989);transform-origin:0 0;">602091</div><div class="t" style="left:228.70px;top:448.87px;line-height:17px;font-size:12.5px;transform:scaleX(1.0080);transform-origin:0 0;">/sub_DAQ/mod_JavaLikeCalc/cntr_ALARM_SRV/</div><div class="t" style="left:523.70px;top:448.87px;line-height:17px;font-size:12.5px;transform:scaleX(1.0989);transform-origin:0 0;">1</div><div class="t" style="left:554.70px;top:448.87px;line-height:17px;font-size:12.5px;transform:scaleX(1.1223);transform-origin:0 0;">Загрузка конфигурации контроллера!</div><div style="left:0px;top:468px;width:26px;height:22px;background:#d4d0c8;box-shadow: inset 0 1px #fff;"></div><div style="left:0px;top:490px;width:26px;height:1px;background:#404040;"></div><div style="left:26px;top:490px;width:1126px;height:1px;background:#c0c0c0;"></div><div class="t" style="left:3.70px;top:471.87px;line-height:17px;font-size:12.5px;transform:scaleX(1.0989);transform-origin:0 0;">21</div><div class="t" style="left:28.70px;top:471.87px;line-height:17px;font-size:12.5px;transform:scaleX(1.0988);transform-origin:0 0;">14-04-2014 09:41:38</div><div class="t" style="left:169.70px;top:471.87px;line-height:17px;font-size:12.5px;transform:scaleX(1.0989);transform-origin:0 0;">601065</div><div class="t" style="left:228.70px;top:471.87px;line-height:17px;font-size:12.5px;transform:scaleX(1.0085);transform-origin:0 0;">/sub_DAQ/mod_JavaLikeCalc/cntr_ALARM_CFG/</div><div class="t" style="left:523.70px;top:471.87px;line-height:17px;font-size:12.5px;transform:scaleX(1.0989);transform-origin:0 0;">1</div><div class="t" style="left:554.70px;top:471.87px;line-height:17px;font-size:12.5px;transform:scaleX(1.1223);transform-origin:0 0;">Загрузка конфигурации контроллера!</div><div style="left:0px;top:491px;width:26px;height:22px;background:#d4d0c8;box-shadow: inset 0 1px #fff;"></div><div style="left:0px;top:513px;width:26px;height:1px;background:#404040;"></div><div style="left:26px;top:513px;width:1126px;height:1px;background:#c0c0c0;"></div><div class="t" style="left:3.70px;top:494.87px;line-height:17px;font-size:12.5px;transform:scaleX(1.0989);transform-origin:0 0;">22</div><div class="t" style="left:28.70px;top:494.87px;line-height:17px;font-size:12.5px;transform:scaleX(1.0988);transform-origin:0 0;">14-04-2014 09:41:38</div><div class="t" style="left:169.70px;top:494.87px;line-height:17px;font-size:12.5px;transform:scaleX(1.0989);transform-origin:0 0;">587528</div><div class="t" style="left:228.70px;top:494.87px;line-height:17px;font-size:12.5px;transform:scaleX(1.0716);transform-origin:0 0;">/sub_Security/</div><div class="t" style="left:523.70px;top:494.87px;line-height:17px;font-size:12.5px;transform:scaleX(1.0989);transform-origin:0 0;">4</div><div class="t" style="left:554.70px;top:494.87px;line-height:17px;font-size:12.5px;transform:scaleX(1.0982);transform-origin:0 0;">Ошибка поиска и создания новых пользователей.</div><div style="left:0px;top:514px;width:26px;height:22px;background:#d4d0c8;box-shadow: inset 0 1px #fff;"></div><div style="left:0px;top:536px;width:26px;height:1px;background:#404040;"></div><div style="left:26px;top:536px;width:1126px;height:1px;background:#c0c0c0;"></div><div class="t" style="left:3.70px;top:517.87px;line-height:17px;font-size:12.5px;transform:scaleX(1.0989);transform-origin:0 0;">23</div><div class="t" style="left:28.70px;top:517.87px;line-height:17px;font-size:12.5px;transform:scaleX(1.0988);transform-origin:0 0;">14-04-2014 09:41:38</div><div class="t" style="left:169.70px;top:517.87px;line-height:17px;font-size:12.5px;transform:scaleX(1.0989);transform-origin:0 0;">587481</div><div class="t" style="left:228.70px;top:517.87px;line-height:17px;font-size:12.5px;transform:scaleX(1.0716);transform-origin:0 0;">/sub_Security/</div><div class="t" style="left:523.70px;top:517.87px;line-height:17px;font-size:12.5px;transform:scaleX(1.0989);transform-origin:0 0;">4</div><div class="t" style="left:554.70px;top:517.87px;line-height:17px;font-size:12.5px;transform:scaleX(1.1043);transform-origin:0 0;">Удаление системного пользователя недопустимо.</div><div style="left:0px;top:537px;width:26px;height:22px;background:#d4d0c8;box-shadow: inset 0 1px #fff;"></div><div style="left:0px;top:559px;width:26px;height:1px;background:#404040;"></div><div style="left:26px;top:559px;width:1126px;height:1px;background:#c0c0c0;"></div><div class="t" style="left:3.70px;top:540.87px;line-height:17px;font-size:12.5px;transform:scaleX(1.0989);transform-origin:0 0;">24</div><div class="t" style="left:28.70px;top:540.87px;line-height:17px;font-size:12.5px;transform:scaleX(1.0988);transform-origin:0 0;">14-04-2014 09:41:38</div><div class="t" style="left:169.70px;top:540.87px;line-height:17px;font-size:12.5px;transform:scaleX(1.0989);transform-origin:0 0;">565555</div><div class="t" style="left:228.70px;top:540.87px;line-height:17px;font-size:12.5px;transform:scaleX(1.1667);transform-origin:0 0;">/</div><div class="t" style="left:523.70px;top:540.87px;line-height:17px;font-size:12.5px;transform:scaleX(1.0989);transform-origin:0 0;">1</div><div class="t" style="left:554.70px;top:540.87px;line-height:17px;font-size:12.5px;transform:scaleX(1.1455);transform-origin:0 0;">Загрузка!</div><div style="left:0px;top:560px;width:26px;height:22px;background:#d4d0c8;box-shadow: inset 0 1px #fff;"></div><div style="left:0px;top:582px;width:26px;height:1px;background:#404040;"></div><div style="left:26px;top:582px;width:1126px;height:1px;background:#c0c0c0;"></div><div class="t" style="left:3.70px;top:563.87px;line-height:17px;font-size:12.5px;transform:scaleX(1.0989);transform-origin:0 0;">25</div><div class="t" style="left:28.70px;top:563.87px;line-height:17px;font-size:12.5px;transform:scaleX(1.0988);transform-origin:0 0;">14-04-2014 09:41:38</div><div class="t" style="left:169.70px;top:563.87px;line-height:17px;font-size:12.5px;transform:scaleX(1.0989);transform-origin:0 0;">564774</div><div class="t" style="left:228.70px;top:563.87px;line-height:17px;font-size:12.5px;transform:scaleX(1.0238);transform-origin:0 0;">/sub_UI/mod_QTCfg/</div><div class="t" style="left:523.70px;top:563.87px;line-height:17px;font-size:12.5px;transform:scaleX(1.0989);transform-origin:0 0;">1</div><div class="t" style="left:554.70px;top:563.87px;line-height:17px;font-size:12.5px;transform:scaleX(1.0633);transform-origin:0 0;">root| Нажат &#x27;/WorkStation/sub_BD/mod_SQLite/lib_SOYUZ%2fvcc%2f..%2fedit</div><div style="left:166px;top:0px;width:1px;height:569px;background:#c0c0c0;"></div><div style="left:225px;top:0px;width:1px;height:569px;background:#c0c0c0;"></div><div style="left:520px;top:0px;width:1px;height:569px;background:#c0c0c0;"></div><div style="left:551px;top:0px;width:1px;height:569px;background:#c0c0c0;"></div><div style="left:1151px;top:0px;width:1px;height:569px;background:#c0c0c0;"></div><div style="left:25px;top:0px;width:1px;height:569px;background:#404040;"></div></div><div style="left:1872px;top:405px;width:16px;height:592px;background-color:#fff;background-image:linear-gradient(45deg,#d4d0c8 25%,transparent 25%,transparent 75%,#d4d0c8 75%),linear-gradient(45deg,#d4d0c8 25%,transparent 25%,transparent 75%,#d4d0c8 75%);background-size:2px 2px;background-position:0 0,1px 1px;"></div><div style="left:1872px;top:405px;width:16px;height:16px;background:#d4d0c8;box-shadow: inset -1px -1px #404040, inset 1px 1px #d4d0c8, inset -2px -2px #9d9991, inset 2px 2px #fff;"></div><svg style="left:1872px;top:405px" width="16" height="16" viewBox="0 0 16 16"><path d="M4.5 9.5 L8 6 L11.5 9.5 Z" fill="#9d9991"/><path d="M5 10.5 L12 10.5" stroke="#fff" stroke-width="1"/></svg><div style="left:1872px;top:421px;width:16px;height:537px;background:#d4d0c8;box-shadow: inset -1px -1px #404040, inset 1px 1px #d4d0c8, inset -2px -2px #9d9991, inset 2px 2px #fff;"></div><div style="left:1872px;top:981px;width:16px;height:16px;background:#d4d0c8;box-shadow: inset -1px -1px #404040, inset 1px 1px #d4d0c8, inset -2px -2px #9d9991, inset 2px 2px #fff;"></div><svg style="left:1872px;top:981px" width="16" height="16" viewBox="0 0 16 16"><path d="M4.5 6.5 L11.5 6.5 L8 10 Z" fill="#000"/></svg><svg style="left:1279px;top:768px" width="16" height="22" viewBox="0 0 16 22"><path d="M2.5 2 L2.5 15.5 L5.5 12.5 L8 18.5 L10.5 17.5 L8 12 L12.5 12 Z" fill="#000" stroke="#fff" stroke-width="1.1" stroke-linejoin="round"/><path d="M3 15.8 L5.5 13.2 L8 19 L11.5 17.5" stroke="#999" stroke-width="0.6" fill="none" opacity="0.6"/></svg></body></html>
